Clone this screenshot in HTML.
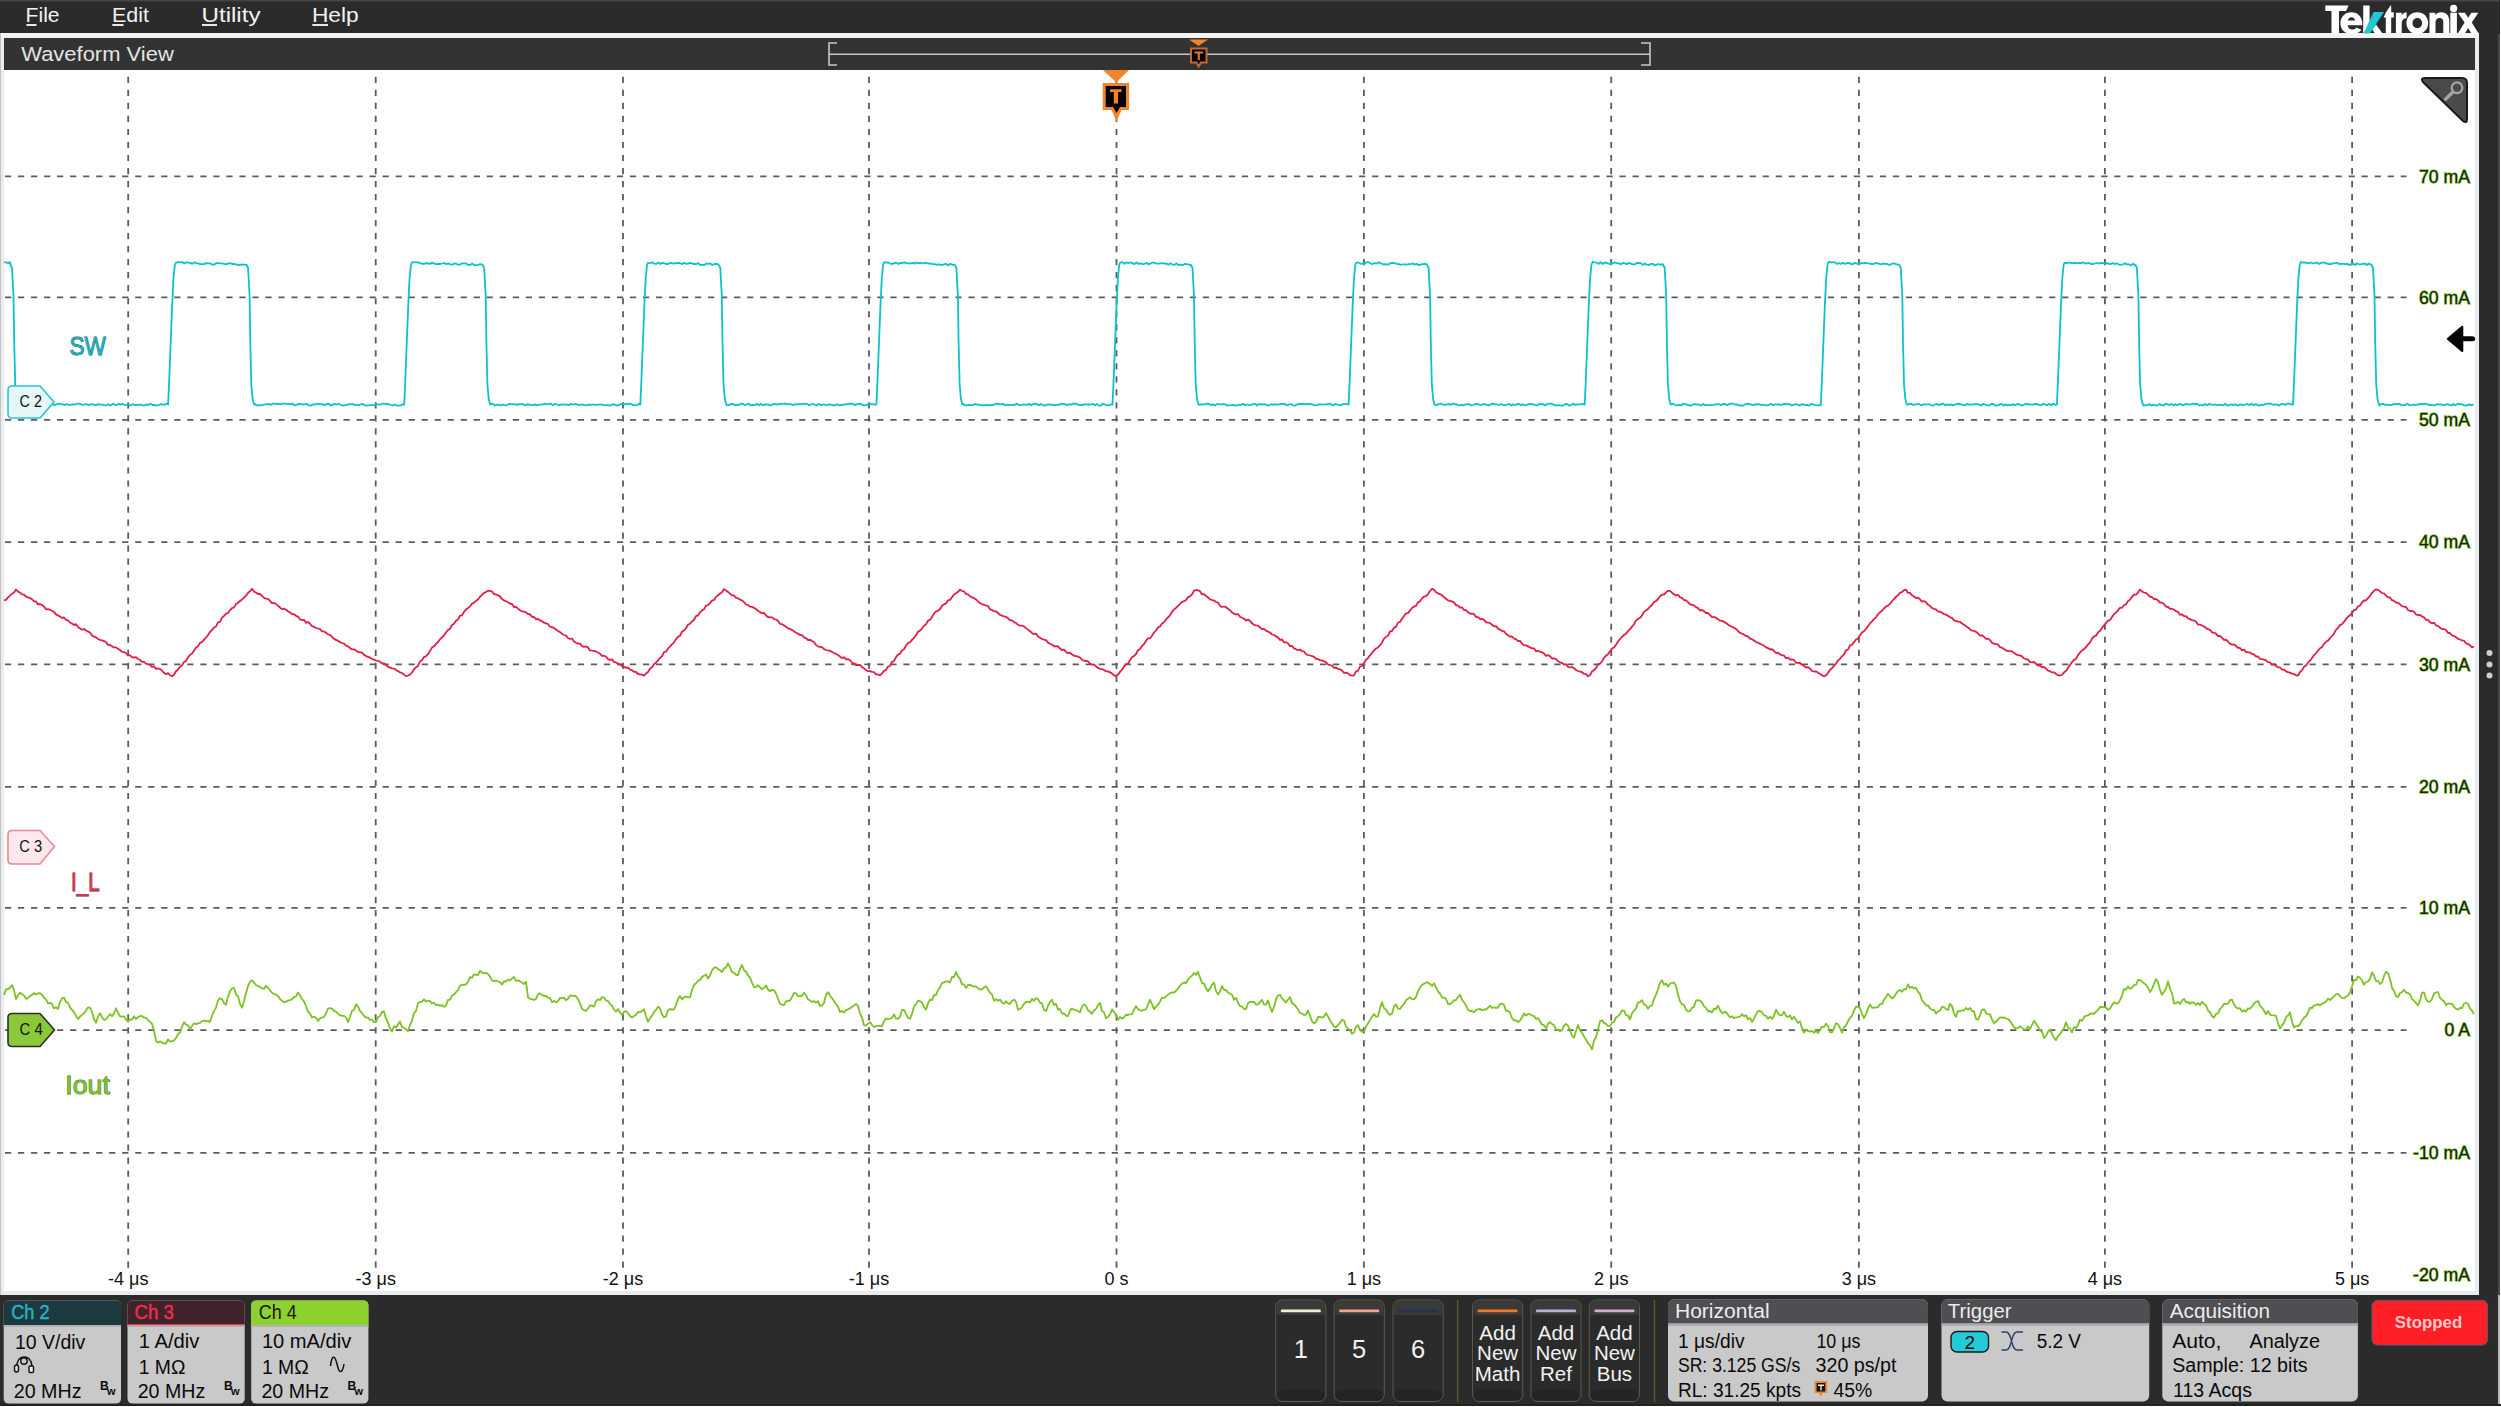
<!DOCTYPE html>
<html><head><meta charset="utf-8"><title>Tektronix Waveform View</title>
<style>
html,body{margin:0;padding:0;}
body{width:2501px;height:1407px;overflow:hidden;position:relative;background:#2b2b2b;font-family:"Liberation Sans", sans-serif;}
.abs{position:absolute;}
.gl{paint-order:stroke;stroke:#86cf34;stroke-width:1.3px;}
</style></head><body>
<div class="abs" style="left:0;top:0;width:2501px;height:33px;background:linear-gradient(#4a4a4a,#2b2b2b 2.5px)"></div>
<div class="abs" style="left:0;top:33px;width:2479px;height:1262px;background:#eaebed"></div>
<div class="abs" style="left:0;top:33px;width:1px;height:1262px;background:#c2c2c6"></div>
<div class="abs" style="left:1px;top:33px;width:2478px;height:5px;background:#f2f4f5"></div>
<div class="abs" style="left:4px;top:38px;width:2471px;height:32px;background:#333333"></div>
<div class="abs" style="left:4px;top:70px;width:2471px;height:1221px;background:#ffffff"></div>
<div class="abs" style="left:2479px;top:33px;width:22px;height:1262px;background:#2b2b2b"></div>
<div class="abs" style="left:2498px;top:34px;width:2px;height:1261px;background:#4a4a4e"></div>
<div class="abs" style="left:2498px;top:1295px;width:2px;height:112px;background:#b8b8b8"></div>
<div class="abs" style="left:2500px;top:0;width:1px;height:1407px;background:#ffffff"></div>
<div class="abs" style="left:0;top:1404px;width:2501px;height:2px;background:#222"></div>
<div class="abs" style="left:0;top:1406px;width:2501px;height:1px;background:#ffffff"></div>

<svg width="2501" height="1407" viewBox="0 0 2501 1407" style="position:absolute;left:0;top:0">
 <g stroke="#5c5c5c" stroke-width="1.8" stroke-dasharray="6.2 6.82" fill="none"><line x1="128.20" y1="76.8" x2="128.20" y2="1268" /><line x1="375.70" y1="76.8" x2="375.70" y2="1268" /><line x1="623.00" y1="76.8" x2="623.00" y2="1268" /><line x1="869.00" y1="76.8" x2="869.00" y2="1268" /><line x1="1116.50" y1="76.8" x2="1116.50" y2="1268" /><line x1="1363.90" y1="76.8" x2="1363.90" y2="1268" /><line x1="1611.20" y1="76.8" x2="1611.20" y2="1268" /><line x1="1858.90" y1="76.8" x2="1858.90" y2="1268" /><line x1="2104.90" y1="76.8" x2="2104.90" y2="1268" /><line x1="2352.10" y1="76.8" x2="2352.10" y2="1268" /></g>
 <g stroke="#5c5c5c" stroke-width="1.8" stroke-dasharray="6.2 6.82" fill="none"><line x1="5" y1="176.30" x2="2406.5" y2="176.30" /><line x1="5" y1="297.40" x2="2406.5" y2="297.40" /><line x1="5" y1="419.80" x2="2406.5" y2="419.80" /><line x1="5" y1="542.10" x2="2406.5" y2="542.10" /><line x1="5" y1="664.30" x2="2406.5" y2="664.30" /><line x1="5" y1="786.90" x2="2406.5" y2="786.90" /><line x1="5" y1="907.90" x2="2406.5" y2="907.90" /><line x1="5" y1="1030.10" x2="2406.5" y2="1030.10" /><line x1="5" y1="1152.90" x2="2406.5" y2="1152.90" /></g>
 <g fill="none" stroke-width="1.8" stroke-linejoin="round">
  <path d="M4.0,262.4 L6.0,262.2 L8.0,263.2 L10.0,262.1 L10.5,265.0 L12.0,268.0 L13.5,296.0 L14.2,342.0 L15.2,384.0 L16.6,399.6 L18.0,404.6 L18.5,404.7 L20.5,404.3 L22.5,403.7 L24.5,404.6 L26.5,403.7 L28.5,404.5 L30.5,403.7 L32.5,403.8 L34.5,404.4 L36.5,405.3 L38.5,403.8 L40.5,404.0 L42.5,404.9 L44.5,405.5 L46.5,404.8 L48.5,404.4 L50.5,405.6 L52.5,403.7 L54.5,405.3 L56.5,404.2 L58.5,403.9 L60.5,403.8 L62.5,404.2 L64.5,405.2 L66.5,404.0 L68.5,404.8 L70.5,404.9 L72.5,404.3 L74.5,404.7 L76.5,403.7 L78.5,403.7 L80.5,404.0 L82.5,405.0 L84.5,404.5 L86.5,404.2 L88.5,404.8 L90.5,404.5 L92.5,404.2 L94.5,405.2 L96.5,405.0 L98.5,404.1 L100.5,404.7 L102.5,404.7 L104.5,405.4 L106.5,405.1 L108.5,404.2 L110.5,405.6 L112.5,403.8 L114.5,404.4 L116.5,405.1 L118.5,403.9 L120.5,404.6 L122.5,403.7 L124.5,404.9 L126.5,405.1 L128.5,404.7 L130.5,405.4 L132.5,404.2 L134.5,405.0 L136.5,404.8 L138.5,404.8 L140.5,404.5 L142.5,405.3 L144.5,405.5 L146.5,404.5 L148.5,404.9 L150.5,403.7 L152.5,405.0 L154.5,404.9 L156.5,405.6 L158.5,405.2 L160.5,404.2 L162.5,404.4 L164.5,404.9 L166.5,403.6 L168.1,404.6 L169.1,382.6 L170.6,344.6 L172.1,306.6 L173.4,279.6 L174.8,265.0 L175.6,263.0 L176.1,262.7 L178.1,262.2 L180.1,262.1 L182.1,262.1 L184.1,263.5 L186.1,262.3 L188.1,262.6 L190.1,262.9 L192.1,263.9 L194.1,262.4 L196.1,263.2 L198.1,263.4 L200.1,264.2 L202.1,264.1 L204.1,264.2 L206.1,263.1 L208.1,263.4 L210.1,263.4 L212.1,264.5 L214.1,264.7 L216.1,263.1 L218.1,263.2 L220.1,263.4 L222.1,263.4 L224.1,264.0 L226.1,264.2 L228.1,263.6 L230.1,263.2 L232.1,264.0 L234.1,264.0 L236.1,264.4 L238.1,265.3 L240.1,264.8 L242.1,264.5 L244.1,264.7 L246.1,264.9 L246.6,265.0 L248.1,268.0 L249.6,296.0 L250.3,342.0 L251.3,384.0 L252.7,399.6 L254.1,404.6 L254.6,403.7 L256.6,405.4 L258.6,405.2 L260.6,405.3 L262.6,405.2 L264.6,404.4 L266.6,404.4 L268.6,403.8 L270.6,404.9 L272.6,403.7 L274.6,403.7 L276.6,404.0 L278.6,403.9 L280.6,404.3 L282.6,403.7 L284.6,403.6 L286.6,403.9 L288.6,403.8 L290.6,404.3 L292.6,403.7 L294.6,405.3 L296.6,404.8 L298.6,403.9 L300.6,404.1 L302.6,404.3 L304.6,404.3 L306.6,403.8 L308.6,405.3 L310.6,405.6 L312.6,404.5 L314.6,404.6 L316.6,403.8 L318.6,403.8 L320.6,404.3 L322.6,404.1 L324.6,405.3 L326.6,403.9 L328.6,403.6 L330.6,405.5 L332.6,404.7 L334.6,403.9 L336.6,404.7 L338.6,403.7 L340.6,404.7 L342.6,405.6 L344.6,405.3 L346.6,405.0 L348.6,404.1 L350.6,404.3 L352.6,403.9 L354.6,405.1 L356.6,404.7 L358.6,405.2 L360.6,404.3 L362.6,404.0 L364.6,405.2 L366.6,405.6 L368.6,405.3 L370.6,405.2 L372.6,405.2 L374.6,405.1 L376.6,404.1 L378.6,404.6 L380.6,404.3 L382.6,403.7 L384.6,403.7 L386.6,404.2 L388.6,404.1 L390.6,405.0 L392.6,405.5 L394.6,404.5 L396.6,405.5 L398.6,405.6 L400.6,405.5 L402.6,404.3 L404.2,404.6 L405.2,382.6 L406.7,344.6 L408.2,306.6 L409.5,279.6 L410.9,265.0 L411.7,263.0 L412.2,262.2 L414.2,262.3 L416.2,262.3 L418.2,262.4 L420.2,263.2 L422.2,263.9 L424.2,263.8 L426.2,263.1 L428.2,263.5 L430.2,263.8 L432.2,262.5 L434.2,263.7 L436.2,264.2 L438.2,264.0 L440.2,264.0 L442.2,263.5 L444.2,263.0 L446.2,264.2 L448.2,263.4 L450.2,264.4 L452.2,264.7 L454.2,263.6 L456.2,263.7 L458.2,264.8 L460.2,264.4 L462.2,263.4 L464.2,263.4 L466.2,263.5 L468.2,265.0 L470.2,264.9 L472.2,263.6 L474.2,265.0 L476.2,265.4 L478.2,264.8 L480.2,264.2 L482.2,264.6 L482.7,265.0 L484.2,268.0 L485.7,296.0 L486.4,342.0 L487.4,384.0 L488.8,399.6 L490.2,404.6 L490.7,403.9 L492.7,403.6 L494.7,405.5 L496.7,404.9 L498.7,404.7 L500.7,405.5 L502.7,404.5 L504.7,405.3 L506.7,405.3 L508.7,404.0 L510.7,404.1 L512.7,404.2 L514.7,404.1 L516.7,404.8 L518.7,404.1 L520.7,404.4 L522.7,403.9 L524.7,405.4 L526.7,404.3 L528.7,404.5 L530.7,404.8 L532.7,405.4 L534.7,404.4 L536.7,405.4 L538.7,404.6 L540.7,404.7 L542.7,404.6 L544.7,403.6 L546.7,404.5 L548.7,404.0 L550.7,403.6 L552.7,405.2 L554.7,403.9 L556.7,404.5 L558.7,405.1 L560.7,404.7 L562.7,404.3 L564.7,404.6 L566.7,404.7 L568.7,405.2 L570.7,403.8 L572.7,404.7 L574.7,404.1 L576.7,404.2 L578.7,405.1 L580.7,404.6 L582.7,404.7 L584.7,405.1 L586.7,405.4 L588.7,404.5 L590.7,404.8 L592.7,404.6 L594.7,404.6 L596.7,405.0 L598.7,404.5 L600.7,404.7 L602.7,404.6 L604.7,405.5 L606.7,405.0 L608.7,405.4 L610.7,405.5 L612.7,404.1 L614.7,404.7 L616.7,405.5 L618.7,405.3 L620.7,403.9 L622.7,403.8 L624.7,404.5 L626.7,403.7 L628.7,404.1 L630.7,403.7 L632.7,404.9 L634.7,405.2 L636.7,405.4 L638.7,403.9 L640.3,404.6 L641.3,382.6 L642.8,344.6 L644.3,306.6 L645.6,279.6 L647.0,265.0 L647.8,263.0 L648.3,263.2 L650.3,263.2 L652.3,262.2 L654.3,263.7 L656.3,263.9 L658.3,262.5 L660.3,264.0 L662.3,262.9 L664.3,263.2 L666.3,264.2 L668.3,264.0 L670.3,262.7 L672.3,263.3 L674.3,263.5 L676.3,263.2 L678.3,262.9 L680.3,263.2 L682.3,264.1 L684.3,262.7 L686.3,263.9 L688.3,263.7 L690.3,262.9 L692.3,263.6 L694.3,264.2 L696.3,264.0 L698.3,263.2 L700.3,265.1 L702.3,264.7 L704.3,265.1 L706.3,263.5 L708.3,263.8 L710.3,263.4 L712.3,265.0 L714.3,264.0 L716.3,263.8 L718.3,264.4 L718.8,265.0 L720.3,268.0 L721.8,296.0 L722.5,342.0 L723.5,384.0 L724.9,399.6 L726.3,404.6 L726.8,405.4 L728.8,405.2 L730.8,404.1 L732.8,403.9 L734.8,405.4 L736.8,404.7 L738.8,405.0 L740.8,403.8 L742.8,403.7 L744.8,405.0 L746.8,404.5 L748.8,403.7 L750.8,405.5 L752.8,404.9 L754.8,405.2 L756.8,403.8 L758.8,405.3 L760.8,403.7 L762.8,405.3 L764.8,404.5 L766.8,404.3 L768.8,404.7 L770.8,405.5 L772.8,404.1 L774.8,403.9 L776.8,404.7 L778.8,404.1 L780.8,403.8 L782.8,403.9 L784.8,403.7 L786.8,404.0 L788.8,404.2 L790.8,404.2 L792.8,405.1 L794.8,404.2 L796.8,404.6 L798.8,404.0 L800.8,404.3 L802.8,403.6 L804.8,404.1 L806.8,403.6 L808.8,405.1 L810.8,404.7 L812.8,404.0 L814.8,404.5 L816.8,405.5 L818.8,403.8 L820.8,405.2 L822.8,404.5 L824.8,404.6 L826.8,405.3 L828.8,404.4 L830.8,404.6 L832.8,405.0 L834.8,405.6 L836.8,404.3 L838.8,405.3 L840.8,405.0 L842.8,404.9 L844.8,404.4 L846.8,404.3 L848.8,403.7 L850.8,403.9 L852.8,403.7 L854.8,405.1 L856.8,404.1 L858.8,403.9 L860.8,403.8 L862.8,405.3 L864.8,405.3 L866.8,404.9 L868.8,404.2 L870.8,404.1 L872.8,404.2 L874.8,404.5 L876.4,404.6 L877.4,382.6 L878.9,344.6 L880.4,306.6 L881.7,279.6 L883.1,265.0 L883.9,263.0 L884.4,262.1 L886.4,262.7 L888.4,262.4 L890.4,263.9 L892.4,263.9 L894.4,263.1 L896.4,262.6 L898.4,264.1 L900.4,262.8 L902.4,263.0 L904.4,262.3 L906.4,263.1 L908.4,263.3 L910.4,263.5 L912.4,262.9 L914.4,263.6 L916.4,262.6 L918.4,263.2 L920.4,262.9 L922.4,263.5 L924.4,262.9 L926.4,262.9 L928.4,263.5 L930.4,263.4 L932.4,264.2 L934.4,264.1 L936.4,264.6 L938.4,264.5 L940.4,264.6 L942.4,265.0 L944.4,264.1 L946.4,264.0 L948.4,265.4 L950.4,263.7 L952.4,264.9 L954.4,264.8 L954.9,265.0 L956.4,268.0 L957.9,296.0 L958.6,342.0 L959.6,384.0 L961.0,399.6 L962.4,404.6 L962.9,403.7 L964.9,405.3 L966.9,405.4 L968.9,404.9 L970.9,405.1 L972.9,405.2 L974.9,403.9 L976.9,404.6 L978.9,404.6 L980.9,405.3 L982.9,405.2 L984.9,405.3 L986.9,404.8 L988.9,405.4 L990.9,405.0 L992.9,405.0 L994.9,404.1 L996.9,403.7 L998.9,403.9 L1000.9,404.3 L1002.9,403.8 L1004.9,405.3 L1006.9,404.7 L1008.9,404.9 L1010.9,404.9 L1012.9,405.0 L1014.9,404.6 L1016.9,403.6 L1018.9,405.2 L1020.9,405.1 L1022.9,404.6 L1024.9,404.7 L1026.9,404.9 L1028.9,403.7 L1030.9,405.1 L1032.9,404.1 L1034.9,403.7 L1036.9,404.1 L1038.9,405.1 L1040.9,404.0 L1042.9,405.1 L1044.9,405.6 L1046.9,404.6 L1048.9,404.4 L1050.9,404.6 L1052.9,405.0 L1054.9,405.1 L1056.9,404.8 L1058.9,404.9 L1060.9,403.8 L1062.9,403.9 L1064.9,404.1 L1066.9,405.1 L1068.9,404.2 L1070.9,404.7 L1072.9,403.6 L1074.9,403.7 L1076.9,404.1 L1078.9,404.9 L1080.9,405.0 L1082.9,405.0 L1084.9,404.2 L1086.9,404.6 L1088.9,404.5 L1090.9,404.5 L1092.9,403.8 L1094.9,405.4 L1096.9,404.0 L1098.9,405.6 L1100.9,405.5 L1102.9,403.6 L1104.9,404.5 L1106.9,405.2 L1108.9,405.5 L1110.9,404.5 L1112.5,404.6 L1113.5,382.6 L1115.0,344.6 L1116.5,306.6 L1117.8,279.6 L1119.2,265.0 L1120.0,263.0 L1120.5,262.3 L1122.5,262.3 L1124.5,263.8 L1126.5,262.4 L1128.5,263.2 L1130.5,262.3 L1132.5,263.1 L1134.5,264.1 L1136.5,262.5 L1138.5,263.9 L1140.5,263.3 L1142.5,264.1 L1144.5,263.8 L1146.5,262.9 L1148.5,264.3 L1150.5,263.5 L1152.5,262.6 L1154.5,262.7 L1156.5,263.7 L1158.5,263.7 L1160.5,263.4 L1162.5,263.1 L1164.5,263.6 L1166.5,263.6 L1168.5,264.7 L1170.5,263.1 L1172.5,264.6 L1174.5,264.8 L1176.5,263.4 L1178.5,265.1 L1180.5,264.7 L1182.5,265.2 L1184.5,264.0 L1186.5,264.2 L1188.5,264.3 L1190.5,265.5 L1191.0,265.0 L1192.5,268.0 L1194.0,296.0 L1194.7,342.0 L1195.7,384.0 L1197.1,399.6 L1198.5,404.6 L1199.0,404.8 L1201.0,404.3 L1203.0,404.5 L1205.0,404.2 L1207.0,403.7 L1209.0,403.8 L1211.0,405.3 L1213.0,404.2 L1215.0,405.5 L1217.0,404.1 L1219.0,404.1 L1221.0,404.6 L1223.0,404.0 L1225.0,404.3 L1227.0,405.5 L1229.0,405.4 L1231.0,405.2 L1233.0,404.9 L1235.0,405.4 L1237.0,405.5 L1239.0,404.7 L1241.0,405.0 L1243.0,403.7 L1245.0,405.1 L1247.0,404.5 L1249.0,405.1 L1251.0,404.9 L1253.0,404.2 L1255.0,403.7 L1257.0,405.5 L1259.0,403.9 L1261.0,404.5 L1263.0,404.3 L1265.0,404.2 L1267.0,405.1 L1269.0,405.6 L1271.0,404.1 L1273.0,404.9 L1275.0,404.2 L1277.0,404.7 L1279.0,404.4 L1281.0,403.9 L1283.0,403.9 L1285.0,404.0 L1287.0,405.4 L1289.0,404.6 L1291.0,404.0 L1293.0,405.4 L1295.0,405.6 L1297.0,404.5 L1299.0,403.9 L1301.0,404.0 L1303.0,403.8 L1305.0,404.3 L1307.0,403.8 L1309.0,404.1 L1311.0,404.1 L1313.0,404.7 L1315.0,405.4 L1317.0,405.1 L1319.0,404.4 L1321.0,404.4 L1323.0,404.6 L1325.0,404.4 L1327.0,404.3 L1329.0,403.7 L1331.0,404.2 L1333.0,405.5 L1335.0,403.9 L1337.0,404.6 L1339.0,404.9 L1341.0,405.3 L1343.0,404.0 L1345.0,404.1 L1347.0,404.1 L1348.6,404.6 L1349.6,382.6 L1351.1,344.6 L1352.6,306.6 L1353.9,279.6 L1355.3,265.0 L1356.1,263.0 L1356.6,262.6 L1358.6,262.7 L1360.6,263.8 L1362.6,263.6 L1364.6,263.7 L1366.6,262.1 L1368.6,262.2 L1370.6,263.6 L1372.6,264.0 L1374.6,263.2 L1376.6,263.5 L1378.6,262.4 L1380.6,263.2 L1382.6,264.3 L1384.6,264.2 L1386.6,264.3 L1388.6,264.5 L1390.6,263.1 L1392.6,262.9 L1394.6,263.1 L1396.6,263.8 L1398.6,264.2 L1400.6,264.8 L1402.6,264.4 L1404.6,264.3 L1406.6,264.6 L1408.6,264.0 L1410.6,264.3 L1412.6,263.3 L1414.6,264.8 L1416.6,263.8 L1418.6,265.2 L1420.6,264.7 L1422.6,264.1 L1424.6,263.8 L1426.6,264.1 L1427.1,265.0 L1428.6,268.0 L1430.1,296.0 L1430.8,342.0 L1431.8,384.0 L1433.2,399.6 L1434.6,404.6 L1435.1,404.9 L1437.1,405.0 L1439.1,403.8 L1441.1,403.7 L1443.1,404.6 L1445.1,404.8 L1447.1,404.4 L1449.1,404.0 L1451.1,404.8 L1453.1,403.6 L1455.1,404.2 L1457.1,404.5 L1459.1,405.5 L1461.1,404.9 L1463.1,405.4 L1465.1,404.6 L1467.1,404.1 L1469.1,404.1 L1471.1,405.5 L1473.1,405.0 L1475.1,404.2 L1477.1,403.6 L1479.1,404.6 L1481.1,404.9 L1483.1,404.4 L1485.1,404.1 L1487.1,404.9 L1489.1,405.5 L1491.1,404.1 L1493.1,403.7 L1495.1,404.3 L1497.1,404.4 L1499.1,405.0 L1501.1,404.0 L1503.1,405.2 L1505.1,405.1 L1507.1,404.6 L1509.1,404.0 L1511.1,405.5 L1513.1,404.2 L1515.1,405.2 L1517.1,404.1 L1519.1,404.0 L1521.1,405.1 L1523.1,404.2 L1525.1,405.5 L1527.1,404.6 L1529.1,404.0 L1531.1,404.0 L1533.1,404.4 L1535.1,404.9 L1537.1,405.5 L1539.1,403.9 L1541.1,404.4 L1543.1,404.0 L1545.1,405.5 L1547.1,403.9 L1549.1,403.7 L1551.1,403.7 L1553.1,404.4 L1555.1,405.4 L1557.1,405.4 L1559.1,405.1 L1561.1,405.6 L1563.1,405.5 L1565.1,404.3 L1567.1,404.0 L1569.1,405.5 L1571.1,405.1 L1573.1,403.7 L1575.1,404.9 L1577.1,404.4 L1579.1,404.3 L1581.1,404.3 L1583.1,403.9 L1584.7,404.6 L1585.7,382.6 L1587.2,344.6 L1588.7,306.6 L1590.0,279.6 L1591.4,265.0 L1592.2,263.0 L1592.7,261.8 L1594.7,262.4 L1596.7,262.6 L1598.7,263.9 L1600.7,262.2 L1602.7,264.0 L1604.7,262.5 L1606.7,262.9 L1608.7,263.8 L1610.7,263.9 L1612.7,263.2 L1614.7,262.4 L1616.7,263.3 L1618.7,263.2 L1620.7,264.3 L1622.7,262.9 L1624.7,263.3 L1626.7,264.4 L1628.7,262.8 L1630.7,263.6 L1632.7,264.4 L1634.7,264.4 L1636.7,263.0 L1638.7,263.0 L1640.7,263.1 L1642.7,264.9 L1644.7,263.6 L1646.7,264.6 L1648.7,265.0 L1650.7,263.9 L1652.7,263.8 L1654.7,265.3 L1656.7,264.6 L1658.7,264.0 L1660.7,264.9 L1662.7,264.2 L1663.2,265.0 L1664.7,268.0 L1666.2,296.0 L1666.9,342.0 L1667.9,384.0 L1669.3,399.6 L1670.7,404.6 L1671.2,404.2 L1673.2,403.6 L1675.2,405.1 L1677.2,405.4 L1679.2,404.9 L1681.2,405.5 L1683.2,403.6 L1685.2,404.1 L1687.2,404.6 L1689.2,405.5 L1691.2,405.5 L1693.2,404.4 L1695.2,404.1 L1697.2,404.5 L1699.2,404.6 L1701.2,405.5 L1703.2,404.0 L1705.2,405.2 L1707.2,405.1 L1709.2,405.2 L1711.2,405.1 L1713.2,404.8 L1715.2,404.3 L1717.2,404.2 L1719.2,404.3 L1721.2,405.2 L1723.2,403.8 L1725.2,404.0 L1727.2,405.1 L1729.2,404.1 L1731.2,403.7 L1733.2,403.7 L1735.2,404.7 L1737.2,404.3 L1739.2,405.6 L1741.2,405.4 L1743.2,405.6 L1745.2,404.1 L1747.2,403.8 L1749.2,403.8 L1751.2,404.6 L1753.2,405.0 L1755.2,404.5 L1757.2,404.1 L1759.2,404.4 L1761.2,404.8 L1763.2,404.9 L1765.2,405.1 L1767.2,405.3 L1769.2,404.9 L1771.2,403.8 L1773.2,405.3 L1775.2,404.2 L1777.2,404.7 L1779.2,404.3 L1781.2,405.1 L1783.2,404.0 L1785.2,404.1 L1787.2,404.1 L1789.2,403.9 L1791.2,405.4 L1793.2,404.8 L1795.2,404.3 L1797.2,404.4 L1799.2,405.6 L1801.2,404.6 L1803.2,404.1 L1805.2,405.2 L1807.2,404.9 L1809.2,405.6 L1811.2,403.8 L1813.2,404.5 L1815.2,405.2 L1817.2,405.3 L1819.2,405.4 L1820.8,404.6 L1821.8,382.6 L1823.3,344.6 L1824.8,306.6 L1826.1,279.6 L1827.5,265.0 L1828.3,263.0 L1828.8,261.9 L1830.8,262.4 L1832.8,262.1 L1834.8,262.3 L1836.8,263.9 L1838.8,263.2 L1840.8,264.0 L1842.8,262.9 L1844.8,263.9 L1846.8,263.1 L1848.8,262.8 L1850.8,263.9 L1852.8,264.3 L1854.8,262.7 L1856.8,263.7 L1858.8,263.8 L1860.8,263.0 L1862.8,263.4 L1864.8,263.0 L1866.8,263.2 L1868.8,263.3 L1870.8,264.0 L1872.8,264.2 L1874.8,263.4 L1876.8,263.0 L1878.8,263.7 L1880.8,264.5 L1882.8,263.5 L1884.8,263.8 L1886.8,263.7 L1888.8,264.9 L1890.8,264.4 L1892.8,263.5 L1894.8,263.7 L1896.8,264.3 L1898.8,264.7 L1899.3,265.0 L1900.8,268.0 L1902.3,296.0 L1903.0,342.0 L1904.0,384.0 L1905.4,399.6 L1906.8,404.6 L1907.3,404.9 L1909.3,403.8 L1911.3,403.9 L1913.3,405.0 L1915.3,404.4 L1917.3,404.2 L1919.3,404.2 L1921.3,405.5 L1923.3,404.2 L1925.3,404.7 L1927.3,404.3 L1929.3,404.4 L1931.3,405.3 L1933.3,405.6 L1935.3,404.3 L1937.3,404.0 L1939.3,405.1 L1941.3,404.0 L1943.3,403.6 L1945.3,405.4 L1947.3,404.4 L1949.3,405.2 L1951.3,404.4 L1953.3,405.4 L1955.3,404.5 L1957.3,403.9 L1959.3,403.6 L1961.3,404.7 L1963.3,404.9 L1965.3,405.4 L1967.3,403.8 L1969.3,404.8 L1971.3,404.3 L1973.3,404.6 L1975.3,403.9 L1977.3,404.2 L1979.3,404.6 L1981.3,405.5 L1983.3,403.8 L1985.3,404.6 L1987.3,405.2 L1989.3,405.5 L1991.3,404.0 L1993.3,403.9 L1995.3,405.5 L1997.3,405.6 L1999.3,404.6 L2001.3,403.7 L2003.3,405.5 L2005.3,404.4 L2007.3,405.4 L2009.3,404.8 L2011.3,405.2 L2013.3,403.9 L2015.3,405.2 L2017.3,404.0 L2019.3,404.4 L2021.3,405.3 L2023.3,405.3 L2025.3,404.0 L2027.3,404.0 L2029.3,404.4 L2031.3,404.6 L2033.3,404.4 L2035.3,403.8 L2037.3,404.1 L2039.3,405.0 L2041.3,405.4 L2043.3,403.7 L2045.3,404.7 L2047.3,405.1 L2049.3,403.7 L2051.3,405.3 L2053.3,403.8 L2055.3,404.8 L2056.9,404.6 L2057.9,382.6 L2059.4,344.6 L2060.9,306.6 L2062.2,279.6 L2063.6,265.0 L2064.4,263.0 L2064.9,262.9 L2066.9,263.1 L2068.9,262.5 L2070.9,262.8 L2072.9,263.2 L2074.9,262.9 L2076.9,263.4 L2078.9,263.0 L2080.9,263.1 L2082.9,262.3 L2084.9,263.5 L2086.9,263.3 L2088.9,262.9 L2090.9,264.0 L2092.9,264.1 L2094.9,263.5 L2096.9,263.0 L2098.9,263.6 L2100.9,262.9 L2102.9,263.0 L2104.9,263.7 L2106.9,263.0 L2108.9,263.8 L2110.9,264.0 L2112.9,263.1 L2114.9,264.3 L2116.9,263.3 L2118.9,264.6 L2120.9,264.8 L2122.9,264.3 L2124.9,263.4 L2126.9,264.4 L2128.9,264.2 L2130.9,265.4 L2132.9,263.8 L2134.9,265.3 L2135.4,265.0 L2136.9,268.0 L2138.4,296.0 L2139.1,342.0 L2140.1,384.0 L2141.5,399.6 L2142.9,404.6 L2143.4,405.6 L2145.4,405.1 L2147.4,405.2 L2149.4,404.0 L2151.4,405.6 L2153.4,404.6 L2155.4,405.5 L2157.4,405.4 L2159.4,403.9 L2161.4,405.2 L2163.4,405.5 L2165.4,403.7 L2167.4,404.3 L2169.4,405.1 L2171.4,403.9 L2173.4,405.4 L2175.4,404.1 L2177.4,405.2 L2179.4,403.9 L2181.4,404.6 L2183.4,405.4 L2185.4,404.0 L2187.4,404.1 L2189.4,404.6 L2191.4,404.2 L2193.4,403.7 L2195.4,404.0 L2197.4,403.9 L2199.4,405.5 L2201.4,405.0 L2203.4,405.4 L2205.4,403.9 L2207.4,405.2 L2209.4,403.8 L2211.4,404.7 L2213.4,404.9 L2215.4,404.3 L2217.4,405.3 L2219.4,404.7 L2221.4,404.8 L2223.4,405.4 L2225.4,403.8 L2227.4,405.6 L2229.4,404.9 L2231.4,404.4 L2233.4,405.2 L2235.4,404.1 L2237.4,405.6 L2239.4,404.8 L2241.4,404.3 L2243.4,405.1 L2245.4,404.5 L2247.4,404.0 L2249.4,405.1 L2251.4,403.7 L2253.4,405.2 L2255.4,404.1 L2257.4,404.9 L2259.4,405.6 L2261.4,404.8 L2263.4,404.9 L2265.4,404.2 L2267.4,403.6 L2269.4,403.7 L2271.4,403.9 L2273.4,404.8 L2275.4,404.5 L2277.4,404.6 L2279.4,405.4 L2281.4,403.9 L2283.4,404.1 L2285.4,404.9 L2287.4,403.6 L2289.4,403.6 L2291.4,404.3 L2293.0,404.6 L2294.0,382.6 L2295.5,344.6 L2297.0,306.6 L2298.3,279.6 L2299.7,265.0 L2300.5,263.0 L2301.0,262.0 L2303.0,262.6 L2305.0,262.3 L2307.0,263.1 L2309.0,263.2 L2311.0,262.5 L2313.0,263.3 L2315.0,263.1 L2317.0,262.5 L2319.0,264.1 L2321.0,262.8 L2323.0,262.6 L2325.0,262.6 L2327.0,263.7 L2329.0,264.2 L2331.0,264.1 L2333.0,263.4 L2335.0,263.2 L2337.0,262.7 L2339.0,264.0 L2341.0,263.9 L2343.0,263.6 L2345.0,264.2 L2347.0,263.8 L2349.0,264.9 L2351.0,264.5 L2353.0,263.6 L2355.0,265.0 L2357.0,263.3 L2359.0,264.3 L2361.0,264.1 L2363.0,263.8 L2365.0,263.5 L2367.0,265.0 L2369.0,263.5 L2371.0,264.7 L2371.5,265.0 L2373.0,268.0 L2374.5,296.0 L2375.2,342.0 L2376.2,384.0 L2377.6,399.6 L2379.0,404.6 L2379.5,405.5 L2381.5,403.9 L2383.5,404.0 L2385.5,404.8 L2387.5,404.6 L2389.5,404.9 L2391.5,405.2 L2393.5,403.9 L2395.5,404.2 L2397.5,404.2 L2399.5,403.7 L2401.5,405.4 L2403.5,405.2 L2405.5,405.0 L2407.5,403.6 L2409.5,405.3 L2411.5,405.1 L2413.5,404.5 L2415.5,405.1 L2417.5,404.5 L2419.5,404.1 L2421.5,403.8 L2423.5,404.1 L2425.5,403.7 L2427.5,404.3 L2429.5,405.1 L2431.5,405.0 L2433.5,405.3 L2435.5,405.0 L2437.5,404.1 L2439.5,404.7 L2441.5,404.5 L2443.5,405.2 L2445.5,404.6 L2447.5,404.1 L2449.5,404.9 L2451.5,405.5 L2453.5,404.0 L2455.5,405.4 L2457.5,403.6 L2459.5,404.1 L2461.5,404.1 L2463.5,405.1 L2465.5,405.5 L2467.5,405.1 L2469.5,404.3 L2471.5,405.4 L2473.5,404.3" stroke="#0ac3cb"/>
  <path d="M4.0,600.3 L6.0,599.9 L8.0,597.4 L10.0,595.6 L12.0,593.7 L14.0,592.5 L16.0,589.5 L18.0,591.6 L20.0,592.6 L22.0,594.3 L24.0,594.6 L26.0,596.5 L28.0,597.4 L30.0,598.1 L32.0,599.2 L34.0,601.3 L36.0,601.4 L38.0,604.4 L40.0,604.0 L42.0,605.0 L44.0,606.4 L46.0,609.3 L48.0,609.2 L50.0,609.8 L52.0,610.7 L54.0,611.9 L56.0,614.4 L58.0,615.4 L60.0,616.6 L62.0,617.9 L64.0,617.5 L66.0,619.8 L68.0,620.4 L70.0,622.5 L72.0,623.6 L74.0,624.9 L76.0,624.2 L78.0,627.1 L80.0,628.4 L82.0,629.7 L84.0,629.0 L86.0,630.5 L88.0,631.5 L90.0,632.5 L92.0,635.5 L94.0,636.6 L96.0,637.4 L98.0,639.0 L100.0,639.8 L102.0,640.3 L104.0,641.1 L106.0,642.3 L108.0,644.9 L110.0,644.9 L112.0,646.2 L114.0,647.4 L116.0,647.4 L118.0,648.9 L120.0,650.0 L122.0,651.9 L124.0,652.1 L126.0,653.0 L128.0,655.4 L130.0,655.3 L132.0,657.1 L134.0,657.5 L136.0,657.2 L138.0,659.0 L140.0,660.0 L142.0,661.8 L144.0,661.8 L146.0,663.6 L148.0,664.3 L150.0,664.6 L152.0,667.0 L154.0,666.3 L156.0,668.9 L158.0,668.5 L160.0,669.1 L162.0,670.5 L164.0,672.8 L166.0,674.2 L168.0,673.1 L170.0,675.2 L172.0,676.2 L174.0,674.8 L176.0,671.2 L178.0,669.5 L180.0,666.8 L182.0,665.6 L184.0,662.0 L186.0,661.1 L188.0,657.3 L190.0,654.9 L192.0,653.6 L194.0,650.8 L196.0,647.6 L198.0,646.4 L200.0,642.9 L202.0,642.1 L204.0,639.7 L206.0,637.6 L208.0,635.0 L210.0,632.1 L212.0,629.9 L214.0,627.6 L216.0,626.4 L218.0,622.4 L220.0,621.9 L222.0,617.7 L224.0,615.8 L226.0,613.7 L228.0,613.1 L230.0,610.3 L232.0,608.1 L234.0,607.4 L236.0,604.1 L238.0,602.7 L240.0,601.0 L242.0,599.6 L244.0,597.7 L246.0,595.6 L248.0,593.0 L250.0,591.1 L252.0,588.8 L254.0,591.6 L256.0,592.5 L258.0,594.0 L260.0,594.0 L262.0,595.9 L264.0,597.9 L266.0,598.7 L268.0,598.9 L270.0,600.9 L272.0,603.1 L274.0,602.9 L276.0,604.1 L278.0,605.6 L280.0,607.7 L282.0,609.1 L284.0,608.7 L286.0,609.8 L288.0,611.2 L290.0,612.5 L292.0,614.0 L294.0,614.3 L296.0,615.8 L298.0,616.6 L300.0,619.5 L302.0,620.0 L304.0,619.8 L306.0,622.8 L308.0,622.0 L310.0,623.7 L312.0,626.2 L314.0,626.9 L316.0,628.0 L318.0,628.5 L320.0,629.2 L322.0,631.4 L324.0,631.4 L326.0,632.8 L328.0,634.4 L330.0,634.9 L332.0,636.9 L334.0,638.9 L336.0,639.9 L338.0,640.7 L340.0,642.2 L342.0,643.0 L344.0,643.5 L346.0,645.7 L348.0,646.3 L350.0,648.0 L352.0,649.4 L354.0,649.3 L356.0,650.6 L358.0,651.9 L360.0,652.2 L362.0,652.7 L364.0,654.8 L366.0,656.1 L368.0,656.9 L370.0,657.7 L372.0,659.0 L374.0,659.6 L376.0,660.5 L378.0,661.0 L380.0,661.7 L382.0,663.4 L384.0,663.3 L386.0,665.0 L388.0,666.8 L390.0,667.6 L392.0,668.4 L394.0,668.6 L396.0,670.0 L398.0,671.1 L400.0,672.4 L402.0,673.0 L404.0,674.6 L406.0,676.1 L408.0,675.5 L410.0,674.6 L412.0,672.5 L414.0,669.3 L416.0,667.2 L418.0,665.9 L420.0,661.5 L422.0,660.3 L424.0,657.1 L426.0,656.2 L428.0,654.2 L430.0,650.9 L432.0,647.6 L434.0,646.3 L436.0,643.9 L438.0,642.0 L440.0,639.3 L442.0,637.3 L444.0,635.5 L446.0,632.5 L448.0,630.0 L450.0,628.9 L452.0,625.0 L454.0,623.8 L456.0,620.8 L458.0,619.4 L460.0,615.7 L462.0,615.3 L464.0,611.9 L466.0,609.4 L468.0,608.0 L470.0,606.4 L472.0,603.6 L474.0,602.6 L476.0,600.8 L478.0,599.5 L480.0,596.8 L482.0,594.8 L484.0,592.8 L486.0,592.1 L488.0,590.6 L490.0,590.8 L492.0,591.5 L494.0,594.1 L496.0,594.5 L498.0,595.3 L500.0,596.4 L502.0,599.1 L504.0,600.4 L506.0,601.3 L508.0,602.2 L510.0,603.6 L512.0,604.1 L514.0,607.0 L516.0,606.9 L518.0,608.6 L520.0,610.2 L522.0,611.3 L524.0,611.6 L526.0,612.4 L528.0,614.0 L530.0,614.2 L532.0,616.9 L534.0,617.0 L536.0,619.2 L538.0,619.0 L540.0,620.4 L542.0,621.2 L544.0,622.7 L546.0,623.3 L548.0,624.0 L550.0,626.7 L552.0,627.0 L554.0,628.1 L556.0,629.4 L558.0,631.0 L560.0,632.1 L562.0,633.8 L564.0,635.0 L566.0,635.6 L568.0,638.0 L570.0,639.0 L572.0,638.5 L574.0,641.4 L576.0,642.8 L578.0,643.7 L580.0,643.5 L582.0,646.2 L584.0,646.8 L586.0,646.4 L588.0,647.4 L590.0,650.4 L592.0,650.7 L594.0,650.8 L596.0,651.5 L598.0,652.5 L600.0,653.7 L602.0,655.9 L604.0,655.9 L606.0,656.5 L608.0,659.1 L610.0,659.8 L612.0,659.4 L614.0,662.0 L616.0,662.4 L618.0,663.7 L620.0,664.5 L622.0,666.0 L624.0,666.8 L626.0,667.9 L628.0,667.5 L630.0,669.6 L632.0,670.2 L634.0,671.7 L636.0,672.0 L638.0,674.0 L640.0,674.3 L642.0,674.6 L644.0,675.6 L646.0,673.5 L648.0,672.0 L650.0,668.7 L652.0,667.2 L654.0,664.2 L656.0,662.6 L658.0,660.3 L660.0,658.0 L662.0,656.4 L664.0,652.2 L666.0,651.7 L668.0,648.5 L670.0,646.4 L672.0,644.3 L674.0,642.4 L676.0,639.1 L678.0,636.9 L680.0,635.8 L682.0,631.6 L684.0,630.5 L686.0,628.3 L688.0,624.7 L690.0,623.7 L692.0,621.5 L694.0,619.8 L696.0,616.2 L698.0,615.4 L700.0,612.3 L702.0,610.4 L704.0,609.4 L706.0,605.6 L708.0,605.2 L710.0,603.1 L712.0,600.6 L714.0,599.9 L716.0,596.9 L718.0,595.3 L720.0,593.5 L722.0,592.2 L724.0,589.1 L726.0,590.6 L728.0,591.9 L730.0,593.6 L732.0,595.4 L734.0,595.5 L736.0,597.9 L738.0,598.2 L740.0,599.7 L742.0,600.4 L744.0,602.2 L746.0,604.5 L748.0,605.0 L750.0,606.6 L752.0,606.8 L754.0,607.9 L756.0,609.0 L758.0,610.7 L760.0,612.0 L762.0,613.4 L764.0,612.9 L766.0,615.5 L768.0,617.0 L770.0,617.3 L772.0,617.4 L774.0,619.0 L776.0,619.5 L778.0,621.0 L780.0,623.8 L782.0,624.2 L784.0,625.4 L786.0,626.8 L788.0,628.3 L790.0,628.9 L792.0,630.1 L794.0,631.3 L796.0,632.7 L798.0,633.6 L800.0,635.0 L802.0,635.2 L804.0,637.4 L806.0,638.1 L808.0,640.0 L810.0,639.8 L812.0,641.1 L814.0,642.0 L816.0,644.9 L818.0,646.4 L820.0,646.8 L822.0,647.2 L824.0,649.1 L826.0,650.0 L828.0,650.5 L830.0,650.8 L832.0,651.9 L834.0,653.1 L836.0,653.9 L838.0,655.1 L840.0,656.5 L842.0,658.1 L844.0,657.2 L846.0,659.3 L848.0,659.1 L850.0,660.3 L852.0,662.8 L854.0,663.3 L856.0,665.0 L858.0,665.0 L860.0,665.0 L862.0,666.9 L864.0,668.3 L866.0,670.1 L868.0,671.2 L870.0,671.1 L872.0,671.9 L874.0,672.2 L876.0,674.4 L878.0,674.5 L880.0,675.4 L882.0,673.3 L884.0,670.9 L886.0,670.1 L888.0,666.5 L890.0,666.0 L892.0,661.8 L894.0,661.1 L896.0,657.2 L898.0,654.6 L900.0,653.8 L902.0,650.4 L904.0,649.2 L906.0,645.6 L908.0,643.0 L910.0,642.3 L912.0,639.9 L914.0,637.9 L916.0,635.4 L918.0,631.7 L920.0,630.6 L922.0,628.5 L924.0,625.7 L926.0,624.4 L928.0,620.7 L930.0,619.9 L932.0,617.1 L934.0,613.3 L936.0,611.3 L938.0,610.8 L940.0,609.3 L942.0,605.7 L944.0,604.4 L946.0,603.4 L948.0,600.3 L950.0,599.9 L952.0,597.2 L954.0,594.4 L956.0,593.2 L958.0,591.8 L960.0,589.6 L962.0,591.1 L964.0,591.3 L966.0,594.1 L968.0,594.4 L970.0,596.2 L972.0,597.4 L974.0,598.2 L976.0,599.4 L978.0,601.5 L980.0,603.1 L982.0,604.0 L984.0,604.8 L986.0,605.5 L988.0,606.2 L990.0,609.3 L992.0,609.9 L994.0,611.2 L996.0,611.3 L998.0,613.0 L1000.0,614.9 L1002.0,615.7 L1004.0,616.3 L1006.0,616.8 L1008.0,618.2 L1010.0,620.3 L1012.0,620.3 L1014.0,622.1 L1016.0,623.0 L1018.0,624.8 L1020.0,625.7 L1022.0,625.7 L1024.0,626.3 L1026.0,628.1 L1028.0,629.6 L1030.0,631.2 L1032.0,632.9 L1034.0,634.2 L1036.0,633.6 L1038.0,636.5 L1040.0,637.7 L1042.0,639.0 L1044.0,639.6 L1046.0,640.1 L1048.0,642.6 L1050.0,643.7 L1052.0,644.6 L1054.0,646.3 L1056.0,646.1 L1058.0,646.5 L1060.0,648.5 L1062.0,650.0 L1064.0,649.7 L1066.0,651.9 L1068.0,653.2 L1070.0,652.7 L1072.0,654.5 L1074.0,655.6 L1076.0,656.1 L1078.0,656.5 L1080.0,657.6 L1082.0,659.7 L1084.0,660.7 L1086.0,661.0 L1088.0,661.2 L1090.0,663.8 L1092.0,664.7 L1094.0,664.5 L1096.0,666.3 L1098.0,668.0 L1100.0,668.9 L1102.0,669.1 L1104.0,670.0 L1106.0,671.3 L1108.0,671.4 L1110.0,672.4 L1112.0,673.4 L1114.0,675.5 L1116.0,675.8 L1118.0,674.6 L1120.0,671.9 L1122.0,669.8 L1124.0,666.6 L1126.0,664.1 L1128.0,663.8 L1130.0,660.1 L1132.0,657.2 L1134.0,656.0 L1136.0,654.0 L1138.0,650.3 L1140.0,648.9 L1142.0,646.0 L1144.0,644.1 L1146.0,640.7 L1148.0,638.4 L1150.0,638.3 L1152.0,635.7 L1154.0,632.6 L1156.0,630.5 L1158.0,627.6 L1160.0,626.4 L1162.0,623.4 L1164.0,622.2 L1166.0,619.6 L1168.0,617.4 L1170.0,615.4 L1172.0,611.8 L1174.0,609.5 L1176.0,607.9 L1178.0,606.0 L1180.0,603.9 L1182.0,602.0 L1184.0,601.2 L1186.0,600.0 L1188.0,597.2 L1190.0,596.4 L1192.0,594.4 L1194.0,590.7 L1196.0,590.0 L1198.0,590.4 L1200.0,591.2 L1202.0,594.4 L1204.0,594.1 L1206.0,596.0 L1208.0,597.4 L1210.0,599.4 L1212.0,600.0 L1214.0,600.6 L1216.0,602.0 L1218.0,602.6 L1220.0,605.7 L1222.0,607.0 L1224.0,606.5 L1226.0,607.2 L1228.0,608.8 L1230.0,610.2 L1232.0,612.5 L1234.0,613.6 L1236.0,614.6 L1238.0,614.0 L1240.0,616.7 L1242.0,617.7 L1244.0,618.6 L1246.0,620.5 L1248.0,619.6 L1250.0,620.9 L1252.0,623.3 L1254.0,624.9 L1256.0,625.4 L1258.0,625.7 L1260.0,627.5 L1262.0,629.1 L1264.0,628.9 L1266.0,630.6 L1268.0,631.6 L1270.0,632.5 L1272.0,634.5 L1274.0,635.0 L1276.0,636.4 L1278.0,637.4 L1280.0,639.8 L1282.0,639.5 L1284.0,642.3 L1286.0,642.3 L1288.0,643.2 L1290.0,646.3 L1292.0,645.8 L1294.0,648.4 L1296.0,649.2 L1298.0,650.2 L1300.0,649.5 L1302.0,651.2 L1304.0,651.4 L1306.0,654.2 L1308.0,655.0 L1310.0,655.5 L1312.0,656.1 L1314.0,656.8 L1316.0,658.8 L1318.0,659.0 L1320.0,660.3 L1322.0,660.3 L1324.0,661.4 L1326.0,662.1 L1328.0,664.5 L1330.0,665.2 L1332.0,665.3 L1334.0,667.9 L1336.0,667.5 L1338.0,668.9 L1340.0,669.3 L1342.0,670.6 L1344.0,672.8 L1346.0,672.7 L1348.0,673.3 L1350.0,675.1 L1352.0,675.7 L1354.0,675.4 L1356.0,671.3 L1358.0,670.9 L1360.0,666.5 L1362.0,666.0 L1364.0,663.2 L1366.0,659.8 L1368.0,658.1 L1370.0,655.3 L1372.0,652.9 L1374.0,650.4 L1376.0,648.5 L1378.0,647.5 L1380.0,645.2 L1382.0,642.7 L1384.0,638.6 L1386.0,636.8 L1388.0,635.8 L1390.0,631.7 L1392.0,630.9 L1394.0,627.7 L1396.0,626.9 L1398.0,622.5 L1400.0,622.0 L1402.0,618.7 L1404.0,616.0 L1406.0,613.4 L1408.0,613.1 L1410.0,610.6 L1412.0,608.0 L1414.0,606.6 L1416.0,605.8 L1418.0,602.4 L1420.0,601.3 L1422.0,598.4 L1424.0,596.7 L1426.0,596.1 L1428.0,594.1 L1430.0,591.0 L1432.0,588.9 L1434.0,589.7 L1436.0,592.2 L1438.0,593.3 L1440.0,594.1 L1442.0,595.2 L1444.0,597.3 L1446.0,598.8 L1448.0,600.3 L1450.0,601.0 L1452.0,601.4 L1454.0,602.4 L1456.0,605.1 L1458.0,605.7 L1460.0,607.6 L1462.0,607.3 L1464.0,610.0 L1466.0,610.1 L1468.0,612.3 L1470.0,613.5 L1472.0,613.8 L1474.0,613.9 L1476.0,617.0 L1478.0,617.1 L1480.0,619.1 L1482.0,618.9 L1484.0,619.8 L1486.0,622.4 L1488.0,622.5 L1490.0,623.1 L1492.0,624.7 L1494.0,626.3 L1496.0,626.2 L1498.0,628.6 L1500.0,629.6 L1502.0,631.0 L1504.0,631.3 L1506.0,633.8 L1508.0,635.2 L1510.0,636.5 L1512.0,636.5 L1514.0,638.6 L1516.0,639.1 L1518.0,641.1 L1520.0,640.8 L1522.0,643.8 L1524.0,645.2 L1526.0,645.4 L1528.0,646.4 L1530.0,647.4 L1532.0,648.4 L1534.0,648.3 L1536.0,651.3 L1538.0,650.7 L1540.0,651.6 L1542.0,652.3 L1544.0,653.6 L1546.0,655.9 L1548.0,655.1 L1550.0,656.2 L1552.0,658.5 L1554.0,658.4 L1556.0,659.0 L1558.0,661.2 L1560.0,662.2 L1562.0,663.1 L1564.0,664.5 L1566.0,664.2 L1568.0,666.8 L1570.0,667.5 L1572.0,667.0 L1574.0,668.2 L1576.0,670.0 L1578.0,671.0 L1580.0,671.6 L1582.0,672.2 L1584.0,673.8 L1586.0,674.2 L1588.0,676.3 L1590.0,675.3 L1592.0,671.4 L1594.0,670.0 L1596.0,668.1 L1598.0,664.4 L1600.0,663.6 L1602.0,661.5 L1604.0,657.9 L1606.0,655.7 L1608.0,654.2 L1610.0,651.2 L1612.0,648.6 L1614.0,647.4 L1616.0,644.7 L1618.0,641.5 L1620.0,639.0 L1622.0,636.9 L1624.0,634.9 L1626.0,633.8 L1628.0,631.1 L1630.0,629.1 L1632.0,626.6 L1634.0,624.4 L1636.0,620.4 L1638.0,619.1 L1640.0,617.8 L1642.0,615.5 L1644.0,611.9 L1646.0,610.4 L1648.0,609.0 L1650.0,606.5 L1652.0,605.0 L1654.0,602.1 L1656.0,601.0 L1658.0,599.3 L1660.0,596.3 L1662.0,594.7 L1664.0,594.7 L1666.0,592.4 L1668.0,590.8 L1670.0,590.9 L1672.0,592.7 L1674.0,594.2 L1676.0,595.4 L1678.0,594.8 L1680.0,597.4 L1682.0,597.8 L1684.0,600.0 L1686.0,600.3 L1688.0,602.2 L1690.0,604.3 L1692.0,604.8 L1694.0,605.3 L1696.0,607.1 L1698.0,608.1 L1700.0,610.3 L1702.0,610.0 L1704.0,611.1 L1706.0,613.0 L1708.0,613.0 L1710.0,615.1 L1712.0,617.0 L1714.0,617.2 L1716.0,617.7 L1718.0,619.3 L1720.0,620.6 L1722.0,620.8 L1724.0,621.9 L1726.0,623.0 L1728.0,624.5 L1730.0,625.9 L1732.0,626.8 L1734.0,627.9 L1736.0,628.8 L1738.0,631.0 L1740.0,632.8 L1742.0,633.5 L1744.0,634.7 L1746.0,636.0 L1748.0,636.3 L1750.0,638.6 L1752.0,639.2 L1754.0,640.6 L1756.0,642.0 L1758.0,642.9 L1760.0,643.7 L1762.0,644.8 L1764.0,645.8 L1766.0,647.4 L1768.0,648.1 L1770.0,649.5 L1772.0,649.2 L1774.0,650.9 L1776.0,653.0 L1778.0,652.6 L1780.0,654.3 L1782.0,655.1 L1784.0,655.6 L1786.0,658.2 L1788.0,657.6 L1790.0,659.6 L1792.0,659.3 L1794.0,660.0 L1796.0,662.8 L1798.0,662.9 L1800.0,663.0 L1802.0,664.8 L1804.0,665.9 L1806.0,667.5 L1808.0,667.2 L1810.0,668.4 L1812.0,671.0 L1814.0,671.5 L1816.0,671.3 L1818.0,672.7 L1820.0,673.7 L1822.0,675.4 L1824.0,676.3 L1826.0,675.4 L1828.0,673.0 L1830.0,670.0 L1832.0,668.1 L1834.0,665.8 L1836.0,663.5 L1838.0,660.5 L1840.0,658.9 L1842.0,656.3 L1844.0,654.5 L1846.0,650.4 L1848.0,649.7 L1850.0,645.4 L1852.0,644.8 L1854.0,642.1 L1856.0,639.6 L1858.0,638.4 L1860.0,635.2 L1862.0,632.6 L1864.0,631.2 L1866.0,629.1 L1868.0,626.2 L1870.0,623.4 L1872.0,621.3 L1874.0,619.1 L1876.0,617.4 L1878.0,614.1 L1880.0,612.3 L1882.0,610.7 L1884.0,608.5 L1886.0,606.5 L1888.0,605.6 L1890.0,603.9 L1892.0,601.2 L1894.0,599.2 L1896.0,596.8 L1898.0,595.1 L1900.0,592.9 L1902.0,592.0 L1904.0,590.1 L1906.0,589.7 L1908.0,592.9 L1910.0,592.9 L1912.0,595.3 L1914.0,596.5 L1916.0,598.0 L1918.0,597.6 L1920.0,599.4 L1922.0,601.7 L1924.0,601.0 L1926.0,602.3 L1928.0,604.7 L1930.0,605.8 L1932.0,608.0 L1934.0,608.8 L1936.0,609.4 L1938.0,611.5 L1940.0,611.6 L1942.0,612.7 L1944.0,614.2 L1946.0,614.6 L1948.0,615.7 L1950.0,617.3 L1952.0,617.9 L1954.0,620.3 L1956.0,620.8 L1958.0,621.6 L1960.0,621.8 L1962.0,623.5 L1964.0,624.7 L1966.0,626.2 L1968.0,627.4 L1970.0,629.3 L1972.0,630.7 L1974.0,630.8 L1976.0,631.9 L1978.0,633.5 L1980.0,635.6 L1982.0,635.3 L1984.0,636.9 L1986.0,638.8 L1988.0,638.6 L1990.0,640.1 L1992.0,642.8 L1994.0,643.6 L1996.0,644.1 L1998.0,644.5 L2000.0,647.2 L2002.0,647.7 L2004.0,649.0 L2006.0,650.4 L2008.0,651.1 L2010.0,651.1 L2012.0,651.4 L2014.0,652.7 L2016.0,654.2 L2018.0,655.1 L2020.0,655.4 L2022.0,656.4 L2024.0,658.3 L2026.0,659.2 L2028.0,659.7 L2030.0,662.1 L2032.0,662.3 L2034.0,662.0 L2036.0,663.8 L2038.0,665.6 L2040.0,665.6 L2042.0,667.4 L2044.0,666.9 L2046.0,668.6 L2048.0,670.7 L2050.0,671.2 L2052.0,672.4 L2054.0,672.3 L2056.0,674.0 L2058.0,675.1 L2060.0,675.5 L2062.0,675.0 L2064.0,672.4 L2066.0,671.1 L2068.0,667.8 L2070.0,665.1 L2072.0,662.1 L2074.0,659.9 L2076.0,658.9 L2078.0,655.1 L2080.0,652.7 L2082.0,650.5 L2084.0,649.0 L2086.0,647.3 L2088.0,644.5 L2090.0,642.6 L2092.0,638.7 L2094.0,636.3 L2096.0,635.7 L2098.0,632.5 L2100.0,631.1 L2102.0,628.0 L2104.0,625.3 L2106.0,623.2 L2108.0,620.6 L2110.0,620.1 L2112.0,617.1 L2114.0,614.3 L2116.0,612.4 L2118.0,610.4 L2120.0,607.8 L2122.0,607.8 L2124.0,605.2 L2126.0,604.2 L2128.0,601.1 L2130.0,599.6 L2132.0,596.9 L2134.0,594.6 L2136.0,594.7 L2138.0,592.6 L2140.0,589.6 L2142.0,591.4 L2144.0,592.6 L2146.0,592.8 L2148.0,594.7 L2150.0,596.8 L2152.0,597.0 L2154.0,599.2 L2156.0,598.9 L2158.0,600.5 L2160.0,602.5 L2162.0,602.6 L2164.0,604.1 L2166.0,606.6 L2168.0,607.0 L2170.0,608.8 L2172.0,608.7 L2174.0,609.7 L2176.0,611.2 L2178.0,611.9 L2180.0,614.8 L2182.0,614.4 L2184.0,616.1 L2186.0,616.2 L2188.0,618.3 L2190.0,619.1 L2192.0,620.2 L2194.0,620.6 L2196.0,621.8 L2198.0,624.5 L2200.0,624.6 L2202.0,625.5 L2204.0,626.5 L2206.0,628.0 L2208.0,629.1 L2210.0,629.8 L2212.0,632.4 L2214.0,632.9 L2216.0,633.7 L2218.0,636.1 L2220.0,636.0 L2222.0,637.6 L2224.0,640.0 L2226.0,639.6 L2228.0,641.5 L2230.0,643.6 L2232.0,644.7 L2234.0,644.5 L2236.0,646.0 L2238.0,647.8 L2240.0,648.0 L2242.0,650.3 L2244.0,649.6 L2246.0,652.2 L2248.0,652.2 L2250.0,652.6 L2252.0,654.0 L2254.0,654.3 L2256.0,656.5 L2258.0,656.5 L2260.0,658.9 L2262.0,659.2 L2264.0,659.7 L2266.0,660.4 L2268.0,662.2 L2270.0,662.3 L2272.0,664.8 L2274.0,664.1 L2276.0,666.0 L2278.0,667.1 L2280.0,667.5 L2282.0,669.6 L2284.0,669.7 L2286.0,671.3 L2288.0,672.1 L2290.0,672.6 L2292.0,673.7 L2294.0,674.1 L2296.0,675.3 L2298.0,675.5 L2300.0,672.0 L2302.0,670.4 L2304.0,666.8 L2306.0,665.5 L2308.0,662.7 L2310.0,660.7 L2312.0,657.9 L2314.0,655.1 L2316.0,653.3 L2318.0,650.7 L2320.0,648.2 L2322.0,647.1 L2324.0,643.8 L2326.0,641.8 L2328.0,640.6 L2330.0,638.1 L2332.0,636.0 L2334.0,633.7 L2336.0,629.8 L2338.0,627.9 L2340.0,625.1 L2342.0,624.2 L2344.0,621.9 L2346.0,618.9 L2348.0,616.8 L2350.0,615.1 L2352.0,613.0 L2354.0,610.2 L2356.0,609.6 L2358.0,606.6 L2360.0,605.4 L2362.0,602.5 L2364.0,600.5 L2366.0,600.3 L2368.0,598.1 L2370.0,596.1 L2372.0,592.8 L2374.0,590.9 L2376.0,589.3 L2378.0,589.8 L2380.0,591.4 L2382.0,593.0 L2384.0,593.5 L2386.0,595.3 L2388.0,597.3 L2390.0,597.5 L2392.0,600.2 L2394.0,600.9 L2396.0,602.5 L2398.0,602.7 L2400.0,604.3 L2402.0,606.1 L2404.0,606.6 L2406.0,607.0 L2408.0,610.0 L2410.0,611.0 L2412.0,611.0 L2414.0,611.6 L2416.0,614.5 L2418.0,615.1 L2420.0,614.9 L2422.0,616.5 L2424.0,617.3 L2426.0,619.9 L2428.0,619.8 L2430.0,622.4 L2432.0,623.2 L2434.0,622.8 L2436.0,625.3 L2438.0,625.8 L2440.0,627.7 L2442.0,629.1 L2444.0,629.1 L2446.0,629.9 L2448.0,633.0 L2450.0,633.0 L2452.0,635.4 L2454.0,636.0 L2456.0,637.3 L2458.0,638.8 L2460.0,639.5 L2462.0,640.3 L2464.0,640.7 L2466.0,643.3 L2468.0,643.9 L2470.0,645.3 L2472.0,647.3 L2474.0,646.5" stroke="#df1f45"/>
  <path d="M4.0,994.9 L6.0,989.2 L8.0,989.2 L10.0,987.5 L12.0,985.1 L14.0,990.2 L16.0,999.1 L18.0,995.3 L20.0,992.7 L22.0,994.0 L24.0,995.6 L26.0,998.8 L28.0,998.0 L30.0,995.9 L32.0,995.0 L34.0,993.1 L36.0,994.4 L38.0,993.4 L40.0,993.2 L42.0,994.7 L44.0,997.7 L46.0,999.4 L48.0,1003.4 L50.0,1002.8 L52.0,1004.0 L54.0,1008.4 L56.0,1007.2 L58.0,1008.9 L60.0,1002.2 L62.0,998.4 L64.0,997.7 L66.0,1002.1 L68.0,1002.9 L70.0,1007.4 L72.0,1010.0 L74.0,1012.0 L76.0,1015.9 L78.0,1019.0 L80.0,1016.7 L82.0,1014.9 L84.0,1013.2 L86.0,1010.4 L88.0,1007.5 L90.0,1007.6 L92.0,1012.0 L94.0,1019.0 L96.0,1022.9 L98.0,1016.5 L100.0,1013.2 L102.0,1017.1 L104.0,1019.8 L106.0,1019.3 L108.0,1016.5 L110.0,1014.0 L112.0,1016.2 L114.0,1013.6 L116.0,1008.3 L118.0,1012.7 L120.0,1016.3 L122.0,1016.6 L124.0,1016.3 L126.0,1019.7 L128.0,1021.7 L130.0,1019.4 L132.0,1019.7 L134.0,1016.3 L136.0,1019.0 L138.0,1017.2 L140.0,1015.9 L142.0,1016.1 L144.0,1017.5 L146.0,1017.9 L148.0,1020.0 L150.0,1021.9 L152.0,1023.7 L154.0,1031.1 L156.0,1040.8 L158.0,1042.7 L160.0,1041.3 L162.0,1042.7 L164.0,1043.4 L166.0,1043.5 L168.0,1039.5 L170.0,1041.3 L172.0,1041.4 L174.0,1040.5 L176.0,1038.1 L178.0,1034.0 L180.0,1032.6 L182.0,1026.6 L184.0,1022.3 L186.0,1024.6 L188.0,1025.4 L190.0,1029.0 L192.0,1026.0 L194.0,1023.3 L196.0,1024.1 L198.0,1023.3 L200.0,1022.9 L202.0,1021.1 L204.0,1020.5 L206.0,1021.3 L208.0,1020.8 L210.0,1022.0 L212.0,1015.6 L214.0,1011.1 L216.0,1007.6 L218.0,1000.6 L220.0,998.2 L222.0,999.1 L224.0,1003.0 L226.0,1004.8 L228.0,996.6 L230.0,991.3 L232.0,988.4 L234.0,987.9 L236.0,994.6 L238.0,996.0 L240.0,1003.8 L242.0,1007.7 L244.0,1001.2 L246.0,993.3 L248.0,986.1 L250.0,981.5 L252.0,980.3 L254.0,982.7 L256.0,985.2 L258.0,985.8 L260.0,987.1 L262.0,988.2 L264.0,988.9 L266.0,985.8 L268.0,987.7 L270.0,990.3 L272.0,992.8 L274.0,993.8 L276.0,994.8 L278.0,996.0 L280.0,998.9 L282.0,1000.8 L284.0,1002.4 L286.0,1001.7 L288.0,1000.6 L290.0,1000.2 L292.0,999.4 L294.0,996.9 L296.0,996.7 L298.0,992.5 L300.0,995.3 L302.0,999.1 L304.0,1001.3 L306.0,1006.0 L308.0,1011.6 L310.0,1013.4 L312.0,1017.5 L314.0,1016.8 L316.0,1017.6 L318.0,1021.0 L320.0,1018.3 L322.0,1017.5 L324.0,1016.9 L326.0,1013.3 L328.0,1008.7 L330.0,1008.2 L332.0,1008.7 L334.0,1010.9 L336.0,1011.7 L338.0,1013.6 L340.0,1015.2 L342.0,1015.9 L344.0,1015.9 L346.0,1017.4 L348.0,1022.1 L350.0,1017.0 L352.0,1010.8 L354.0,1009.9 L356.0,1004.5 L358.0,1006.3 L360.0,1011.0 L362.0,1012.9 L364.0,1015.9 L366.0,1017.6 L368.0,1017.4 L370.0,1020.0 L372.0,1019.4 L374.0,1022.2 L376.0,1022.1 L378.0,1017.2 L380.0,1015.8 L382.0,1011.9 L384.0,1011.5 L386.0,1018.7 L388.0,1022.5 L390.0,1028.1 L392.0,1031.6 L394.0,1026.3 L396.0,1027.5 L398.0,1024.5 L400.0,1021.6 L402.0,1027.1 L404.0,1028.0 L406.0,1029.3 L408.0,1031.2 L410.0,1025.0 L412.0,1020.9 L414.0,1013.2 L416.0,1010.9 L418.0,1003.1 L420.0,1001.9 L422.0,1001.7 L424.0,999.4 L426.0,1001.7 L428.0,1000.7 L430.0,1001.2 L432.0,1003.5 L434.0,1002.8 L436.0,1005.2 L438.0,1004.6 L440.0,1005.9 L442.0,1005.0 L444.0,1006.8 L446.0,1005.7 L448.0,1000.0 L450.0,999.6 L452.0,995.6 L454.0,994.8 L456.0,992.1 L458.0,990.2 L460.0,985.5 L462.0,984.6 L464.0,984.8 L466.0,984.4 L468.0,982.0 L470.0,977.1 L472.0,977.8 L474.0,974.4 L476.0,974.9 L478.0,975.0 L480.0,970.7 L482.0,972.6 L484.0,973.2 L486.0,972.9 L488.0,974.0 L490.0,976.7 L492.0,980.4 L494.0,981.2 L496.0,980.6 L498.0,981.5 L500.0,982.2 L502.0,984.5 L504.0,981.2 L506.0,981.7 L508.0,979.7 L510.0,980.5 L512.0,978.4 L514.0,977.0 L516.0,980.8 L518.0,980.3 L520.0,981.4 L522.0,982.6 L524.0,984.0 L526.0,981.8 L528.0,997.4 L530.0,998.8 L532.0,999.2 L534.0,1000.0 L536.0,998.9 L538.0,994.3 L540.0,993.3 L542.0,995.2 L544.0,995.8 L546.0,996.0 L548.0,997.7 L550.0,997.8 L552.0,1002.2 L554.0,1000.8 L556.0,1002.4 L558.0,1001.0 L560.0,998.0 L562.0,998.4 L564.0,997.6 L566.0,1000.2 L568.0,998.8 L570.0,995.8 L572.0,995.5 L574.0,996.0 L576.0,996.2 L578.0,999.2 L580.0,1003.7 L582.0,1008.6 L584.0,1010.1 L586.0,1010.9 L588.0,1008.5 L590.0,1005.4 L592.0,1005.6 L594.0,1006.7 L596.0,1001.1 L598.0,999.4 L600.0,1000.2 L602.0,997.1 L604.0,997.6 L606.0,1000.3 L608.0,1001.1 L610.0,1004.1 L612.0,1005.8 L614.0,1009.5 L616.0,1011.6 L618.0,1009.0 L620.0,1012.5 L622.0,1014.9 L624.0,1011.8 L626.0,1011.0 L628.0,1013.2 L630.0,1016.0 L632.0,1017.6 L634.0,1016.1 L636.0,1014.8 L638.0,1011.9 L640.0,1012.3 L642.0,1011.2 L644.0,1009.3 L646.0,1016.0 L648.0,1021.9 L650.0,1018.1 L652.0,1015.8 L654.0,1011.9 L656.0,1009.9 L658.0,1006.6 L660.0,1008.4 L662.0,1014.5 L664.0,1017.3 L666.0,1016.4 L668.0,1010.4 L670.0,1009.1 L672.0,1009.5 L674.0,1009.5 L676.0,1005.1 L678.0,999.3 L680.0,996.0 L682.0,999.3 L684.0,997.4 L686.0,996.6 L688.0,997.4 L690.0,997.3 L692.0,990.1 L694.0,985.0 L696.0,983.3 L698.0,980.8 L700.0,980.1 L702.0,976.9 L704.0,975.9 L706.0,974.4 L708.0,978.6 L710.0,975.5 L712.0,970.4 L714.0,967.9 L716.0,967.2 L718.0,969.2 L720.0,970.0 L722.0,972.0 L724.0,968.3 L726.0,967.7 L728.0,963.3 L730.0,967.4 L732.0,972.3 L734.0,972.5 L736.0,974.8 L738.0,975.0 L740.0,968.8 L742.0,965.0 L744.0,970.3 L746.0,971.6 L748.0,975.3 L750.0,977.7 L752.0,982.6 L754.0,987.2 L756.0,987.1 L758.0,985.2 L760.0,987.5 L762.0,989.1 L764.0,987.9 L766.0,985.5 L768.0,989.5 L770.0,991.2 L772.0,989.8 L774.0,990.1 L776.0,993.5 L778.0,998.5 L780.0,1003.7 L782.0,1004.6 L784.0,1005.1 L786.0,1001.4 L788.0,1000.8 L790.0,1000.6 L792.0,997.2 L794.0,992.8 L796.0,993.3 L798.0,996.1 L800.0,996.0 L802.0,995.8 L804.0,992.7 L806.0,995.2 L808.0,999.3 L810.0,1000.6 L812.0,1001.9 L814.0,1001.1 L816.0,1002.5 L818.0,1001.3 L820.0,1005.9 L822.0,1005.5 L824.0,1003.0 L826.0,994.7 L828.0,992.3 L830.0,995.4 L832.0,998.2 L834.0,1001.1 L836.0,1003.9 L838.0,1006.6 L840.0,1012.2 L842.0,1010.8 L844.0,1012.6 L846.0,1010.1 L848.0,1009.3 L850.0,1008.4 L852.0,1006.8 L854.0,1005.6 L856.0,1003.8 L858.0,1005.9 L860.0,1013.6 L862.0,1017.6 L864.0,1025.3 L866.0,1025.4 L868.0,1023.6 L870.0,1022.1 L872.0,1025.0 L874.0,1027.2 L876.0,1025.9 L878.0,1025.8 L880.0,1025.7 L882.0,1026.2 L884.0,1021.2 L886.0,1018.6 L888.0,1019.0 L890.0,1018.6 L892.0,1017.7 L894.0,1014.4 L896.0,1018.7 L898.0,1018.9 L900.0,1016.7 L902.0,1009.9 L904.0,1009.9 L906.0,1014.1 L908.0,1017.7 L910.0,1018.8 L912.0,1013.7 L914.0,1006.4 L916.0,1004.1 L918.0,1000.7 L920.0,1001.1 L922.0,1002.8 L924.0,1007.1 L926.0,1009.6 L928.0,1003.5 L930.0,999.6 L932.0,1000.1 L934.0,995.1 L936.0,995.0 L938.0,990.2 L940.0,987.4 L942.0,983.0 L944.0,982.4 L946.0,981.6 L948.0,981.2 L950.0,982.5 L952.0,977.0 L954.0,977.0 L956.0,972.0 L958.0,976.3 L960.0,978.9 L962.0,984.4 L964.0,984.4 L966.0,987.9 L968.0,985.0 L970.0,984.8 L972.0,985.9 L974.0,986.5 L976.0,986.4 L978.0,988.2 L980.0,989.5 L982.0,989.3 L984.0,987.5 L986.0,986.3 L988.0,989.6 L990.0,992.7 L992.0,994.4 L994.0,1000.7 L996.0,999.2 L998.0,1000.8 L1000.0,999.4 L1002.0,1002.8 L1004.0,1003.7 L1006.0,1001.3 L1008.0,1003.5 L1010.0,1003.9 L1012.0,1000.7 L1014.0,999.7 L1016.0,1001.9 L1018.0,1009.8 L1020.0,1008.9 L1022.0,1007.4 L1024.0,1003.8 L1026.0,1002.0 L1028.0,1001.7 L1030.0,1002.5 L1032.0,998.9 L1034.0,1000.8 L1036.0,998.1 L1038.0,999.0 L1040.0,1002.6 L1042.0,1003.4 L1044.0,1009.9 L1046.0,1011.1 L1048.0,1005.8 L1050.0,1001.8 L1052.0,999.7 L1054.0,1005.1 L1056.0,1003.7 L1058.0,1009.6 L1060.0,1009.0 L1062.0,1013.6 L1064.0,1013.3 L1066.0,1015.6 L1068.0,1016.2 L1070.0,1010.7 L1072.0,1008.4 L1074.0,1009.9 L1076.0,1009.9 L1078.0,1011.2 L1080.0,1012.3 L1082.0,1006.6 L1084.0,1004.5 L1086.0,1005.8 L1088.0,1010.2 L1090.0,1011.7 L1092.0,1013.8 L1094.0,1010.5 L1096.0,1008.9 L1098.0,1005.2 L1100.0,1002.9 L1102.0,1011.0 L1104.0,1012.2 L1106.0,1018.2 L1108.0,1016.9 L1110.0,1014.5 L1112.0,1009.4 L1114.0,1012.0 L1116.0,1014.6 L1118.0,1019.8 L1120.0,1017.0 L1122.0,1018.7 L1124.0,1017.4 L1126.0,1014.8 L1128.0,1015.0 L1130.0,1014.4 L1132.0,1014.1 L1134.0,1009.5 L1136.0,1006.2 L1138.0,1009.1 L1140.0,1010.3 L1142.0,1010.8 L1144.0,1009.7 L1146.0,1009.5 L1148.0,1004.5 L1150.0,999.9 L1152.0,1004.2 L1154.0,1009.1 L1156.0,1006.6 L1158.0,1004.8 L1160.0,1001.7 L1162.0,997.5 L1164.0,998.0 L1166.0,996.4 L1168.0,994.6 L1170.0,993.1 L1172.0,992.4 L1174.0,992.5 L1176.0,990.8 L1178.0,988.7 L1180.0,985.7 L1182.0,983.7 L1184.0,982.4 L1186.0,983.4 L1188.0,979.5 L1190.0,977.4 L1192.0,975.8 L1194.0,972.9 L1196.0,974.9 L1198.0,971.8 L1200.0,977.5 L1202.0,982.9 L1204.0,983.6 L1206.0,988.4 L1208.0,991.1 L1210.0,988.6 L1212.0,984.7 L1214.0,982.5 L1216.0,991.1 L1218.0,994.4 L1220.0,991.6 L1222.0,986.0 L1224.0,989.8 L1226.0,989.9 L1228.0,992.6 L1230.0,993.8 L1232.0,994.7 L1234.0,999.8 L1236.0,997.9 L1238.0,1002.9 L1240.0,1006.0 L1242.0,1006.7 L1244.0,1009.0 L1246.0,1009.1 L1248.0,1003.1 L1250.0,1001.6 L1252.0,1002.0 L1254.0,1001.8 L1256.0,1004.5 L1258.0,1004.6 L1260.0,1001.8 L1262.0,1000.0 L1264.0,1004.3 L1266.0,1004.7 L1268.0,1000.5 L1270.0,1006.8 L1272.0,1011.8 L1274.0,1006.9 L1276.0,999.2 L1278.0,995.5 L1280.0,994.8 L1282.0,998.4 L1284.0,1000.3 L1286.0,1002.6 L1288.0,999.5 L1290.0,997.1 L1292.0,1003.1 L1294.0,1004.4 L1296.0,1006.7 L1298.0,1009.3 L1300.0,1013.1 L1302.0,1013.3 L1304.0,1015.1 L1306.0,1014.5 L1308.0,1010.5 L1310.0,1015.7 L1312.0,1021.3 L1314.0,1023.4 L1316.0,1022.1 L1318.0,1017.0 L1320.0,1016.8 L1322.0,1017.7 L1324.0,1016.7 L1326.0,1013.1 L1328.0,1016.4 L1330.0,1020.4 L1332.0,1023.4 L1334.0,1026.6 L1336.0,1027.4 L1338.0,1024.9 L1340.0,1023.0 L1342.0,1019.8 L1344.0,1020.5 L1346.0,1026.5 L1348.0,1028.7 L1350.0,1030.6 L1352.0,1033.7 L1354.0,1032.3 L1356.0,1026.9 L1358.0,1025.2 L1360.0,1030.1 L1362.0,1031.8 L1364.0,1031.3 L1366.0,1026.6 L1368.0,1023.5 L1370.0,1019.9 L1372.0,1016.6 L1374.0,1014.1 L1376.0,1016.6 L1378.0,1016.3 L1380.0,1008.1 L1382.0,1002.2 L1384.0,1008.1 L1386.0,1009.7 L1388.0,1013.0 L1390.0,1014.9 L1392.0,1013.5 L1394.0,1006.4 L1396.0,1004.4 L1398.0,1008.7 L1400.0,1008.9 L1402.0,1006.0 L1404.0,1004.2 L1406.0,1000.2 L1408.0,998.7 L1410.0,997.3 L1412.0,999.1 L1414.0,999.3 L1416.0,996.9 L1418.0,991.3 L1420.0,987.6 L1422.0,984.8 L1424.0,983.9 L1426.0,982.4 L1428.0,982.6 L1430.0,983.9 L1432.0,986.0 L1434.0,983.3 L1436.0,987.5 L1438.0,991.3 L1440.0,993.7 L1442.0,997.1 L1444.0,997.9 L1446.0,998.7 L1448.0,1003.9 L1450.0,1004.4 L1452.0,1002.6 L1454.0,1000.3 L1456.0,1000.0 L1458.0,997.3 L1460.0,994.8 L1462.0,999.8 L1464.0,1002.4 L1466.0,1005.2 L1468.0,1009.8 L1470.0,1011.0 L1472.0,1010.9 L1474.0,1012.3 L1476.0,1009.9 L1478.0,1009.3 L1480.0,1008.9 L1482.0,1010.2 L1484.0,1009.5 L1486.0,1009.5 L1488.0,1007.8 L1490.0,1005.7 L1492.0,1008.0 L1494.0,1007.3 L1496.0,1007.8 L1498.0,1007.5 L1500.0,1004.0 L1502.0,1003.6 L1504.0,1005.0 L1506.0,1010.9 L1508.0,1010.6 L1510.0,1012.7 L1512.0,1018.2 L1514.0,1020.4 L1516.0,1020.5 L1518.0,1022.0 L1520.0,1020.5 L1522.0,1017.6 L1524.0,1013.5 L1526.0,1015.5 L1528.0,1014.1 L1530.0,1014.2 L1532.0,1015.6 L1534.0,1016.1 L1536.0,1018.9 L1538.0,1018.2 L1540.0,1021.2 L1542.0,1024.7 L1544.0,1025.1 L1546.0,1028.4 L1548.0,1023.8 L1550.0,1022.1 L1552.0,1023.9 L1554.0,1025.2 L1556.0,1029.5 L1558.0,1030.1 L1560.0,1031.3 L1562.0,1030.3 L1564.0,1025.7 L1566.0,1023.9 L1568.0,1025.7 L1570.0,1030.6 L1572.0,1035.6 L1574.0,1037.7 L1576.0,1031.0 L1578.0,1025.0 L1580.0,1030.2 L1582.0,1032.9 L1584.0,1036.4 L1586.0,1039.6 L1588.0,1043.2 L1590.0,1045.3 L1592.0,1049.4 L1594.0,1040.6 L1596.0,1037.3 L1598.0,1029.9 L1600.0,1021.1 L1602.0,1020.3 L1604.0,1022.9 L1606.0,1023.9 L1608.0,1026.0 L1610.0,1025.9 L1612.0,1022.7 L1614.0,1022.2 L1616.0,1017.4 L1618.0,1016.2 L1620.0,1014.1 L1622.0,1010.4 L1624.0,1010.6 L1626.0,1015.1 L1628.0,1015.5 L1630.0,1019.5 L1632.0,1013.1 L1634.0,1010.8 L1636.0,1008.4 L1638.0,1002.4 L1640.0,1002.2 L1642.0,1000.1 L1644.0,1004.4 L1646.0,1005.3 L1648.0,1008.7 L1650.0,1006.0 L1652.0,1005.5 L1654.0,999.1 L1656.0,994.6 L1658.0,989.6 L1660.0,982.8 L1662.0,980.3 L1664.0,984.6 L1666.0,983.4 L1668.0,986.5 L1670.0,983.7 L1672.0,982.8 L1674.0,982.6 L1676.0,985.8 L1678.0,994.6 L1680.0,1001.3 L1682.0,1004.4 L1684.0,1004.9 L1686.0,1009.8 L1688.0,1011.4 L1690.0,1011.1 L1692.0,1007.8 L1694.0,1006.9 L1696.0,1000.6 L1698.0,1000.1 L1700.0,1000.6 L1702.0,1002.5 L1704.0,1006.4 L1706.0,1007.9 L1708.0,1011.3 L1710.0,1011.0 L1712.0,1012.5 L1714.0,1008.6 L1716.0,1009.0 L1718.0,1005.8 L1720.0,1010.1 L1722.0,1013.1 L1724.0,1012.3 L1726.0,1012.0 L1728.0,1014.8 L1730.0,1017.1 L1732.0,1016.2 L1734.0,1018.3 L1736.0,1017.3 L1738.0,1017.2 L1740.0,1016.5 L1742.0,1014.1 L1744.0,1016.4 L1746.0,1015.2 L1748.0,1019.4 L1750.0,1017.9 L1752.0,1021.9 L1754.0,1018.7 L1756.0,1014.4 L1758.0,1011.1 L1760.0,1011.0 L1762.0,1012.3 L1764.0,1015.4 L1766.0,1015.7 L1768.0,1018.8 L1770.0,1016.5 L1772.0,1019.0 L1774.0,1015.8 L1776.0,1009.7 L1778.0,1013.4 L1780.0,1015.4 L1782.0,1015.1 L1784.0,1011.8 L1786.0,1015.8 L1788.0,1017.1 L1790.0,1015.4 L1792.0,1019.3 L1794.0,1016.7 L1796.0,1019.8 L1798.0,1022.9 L1800.0,1021.4 L1802.0,1028.2 L1804.0,1032.5 L1806.0,1030.1 L1808.0,1030.9 L1810.0,1031.6 L1812.0,1030.8 L1814.0,1032.9 L1816.0,1030.7 L1818.0,1033.1 L1820.0,1029.8 L1822.0,1026.7 L1824.0,1027.1 L1826.0,1023.6 L1828.0,1026.3 L1830.0,1032.3 L1832.0,1032.4 L1834.0,1028.5 L1836.0,1023.2 L1838.0,1024.1 L1840.0,1028.0 L1842.0,1032.6 L1844.0,1027.2 L1846.0,1025.5 L1848.0,1021.3 L1850.0,1017.9 L1852.0,1015.9 L1854.0,1010.4 L1856.0,1006.7 L1858.0,1006.8 L1860.0,1008.2 L1862.0,1013.9 L1864.0,1018.0 L1866.0,1014.1 L1868.0,1008.6 L1870.0,1004.4 L1872.0,1007.9 L1874.0,1007.5 L1876.0,1007.7 L1878.0,1007.1 L1880.0,1004.2 L1882.0,1004.2 L1884.0,999.4 L1886.0,997.3 L1888.0,993.7 L1890.0,996.2 L1892.0,998.5 L1894.0,997.0 L1896.0,993.8 L1898.0,991.0 L1900.0,990.0 L1902.0,991.7 L1904.0,989.2 L1906.0,989.5 L1908.0,984.4 L1910.0,988.0 L1912.0,986.8 L1914.0,988.3 L1916.0,987.8 L1918.0,991.9 L1920.0,994.1 L1922.0,1000.4 L1924.0,1002.3 L1926.0,1005.6 L1928.0,1005.5 L1930.0,1008.1 L1932.0,1009.9 L1934.0,1010.0 L1936.0,1013.6 L1938.0,1011.3 L1940.0,1010.6 L1942.0,1006.8 L1944.0,1007.1 L1946.0,1009.2 L1948.0,1010.0 L1950.0,1003.8 L1952.0,1006.1 L1954.0,1013.7 L1956.0,1016.7 L1958.0,1010.9 L1960.0,1011.3 L1962.0,1010.3 L1964.0,1010.4 L1966.0,1008.0 L1968.0,1009.6 L1970.0,1008.0 L1972.0,1011.1 L1974.0,1011.2 L1976.0,1018.9 L1978.0,1019.8 L1980.0,1015.4 L1982.0,1009.7 L1984.0,1009.3 L1986.0,1012.9 L1988.0,1014.2 L1990.0,1014.4 L1992.0,1019.5 L1994.0,1023.2 L1996.0,1021.8 L1998.0,1019.4 L2000.0,1017.3 L2002.0,1017.7 L2004.0,1017.3 L2006.0,1018.5 L2008.0,1019.0 L2010.0,1020.9 L2012.0,1024.2 L2014.0,1027.0 L2016.0,1028.5 L2018.0,1028.0 L2020.0,1026.1 L2022.0,1027.9 L2024.0,1029.4 L2026.0,1029.5 L2028.0,1026.5 L2030.0,1029.1 L2032.0,1024.8 L2034.0,1020.8 L2036.0,1023.8 L2038.0,1026.7 L2040.0,1030.7 L2042.0,1031.6 L2044.0,1038.1 L2046.0,1035.9 L2048.0,1031.9 L2050.0,1029.7 L2052.0,1033.9 L2054.0,1037.9 L2056.0,1040.1 L2058.0,1036.0 L2060.0,1034.3 L2062.0,1031.1 L2064.0,1028.2 L2066.0,1022.4 L2068.0,1027.5 L2070.0,1028.3 L2072.0,1032.4 L2074.0,1027.2 L2076.0,1027.9 L2078.0,1024.9 L2080.0,1019.7 L2082.0,1020.9 L2084.0,1017.3 L2086.0,1015.6 L2088.0,1015.6 L2090.0,1013.6 L2092.0,1013.5 L2094.0,1013.9 L2096.0,1011.7 L2098.0,1010.1 L2100.0,1007.0 L2102.0,1007.0 L2104.0,1007.1 L2106.0,1007.7 L2108.0,1009.9 L2110.0,1008.5 L2112.0,1005.3 L2114.0,1002.3 L2116.0,1003.5 L2118.0,1003.4 L2120.0,1000.1 L2122.0,995.5 L2124.0,989.0 L2126.0,989.6 L2128.0,986.6 L2130.0,988.9 L2132.0,987.6 L2134.0,985.2 L2136.0,984.9 L2138.0,980.0 L2140.0,980.0 L2142.0,981.6 L2144.0,983.2 L2146.0,984.7 L2148.0,987.5 L2150.0,992.0 L2152.0,988.9 L2154.0,983.8 L2156.0,979.1 L2158.0,981.9 L2160.0,989.8 L2162.0,994.8 L2164.0,991.7 L2166.0,988.4 L2168.0,981.3 L2170.0,988.9 L2172.0,993.4 L2174.0,1003.7 L2176.0,1003.0 L2178.0,1001.9 L2180.0,1004.0 L2182.0,1000.6 L2184.0,998.8 L2186.0,1002.3 L2188.0,1002.0 L2190.0,1003.8 L2192.0,1002.3 L2194.0,1002.7 L2196.0,1004.8 L2198.0,1003.0 L2200.0,1005.0 L2202.0,1001.6 L2204.0,1004.1 L2206.0,1005.3 L2208.0,1010.5 L2210.0,1012.2 L2212.0,1016.0 L2214.0,1017.6 L2216.0,1013.9 L2218.0,1013.3 L2220.0,1008.9 L2222.0,1007.1 L2224.0,1003.9 L2226.0,1003.8 L2228.0,1003.6 L2230.0,1000.2 L2232.0,999.6 L2234.0,1004.5 L2236.0,1007.2 L2238.0,1008.6 L2240.0,1008.2 L2242.0,1011.6 L2244.0,1010.2 L2246.0,1011.7 L2248.0,1008.4 L2250.0,1008.6 L2252.0,1006.7 L2254.0,1003.5 L2256.0,1002.0 L2258.0,1001.0 L2260.0,1005.8 L2262.0,1007.7 L2264.0,1010.5 L2266.0,1014.3 L2268.0,1011.1 L2270.0,1014.8 L2272.0,1015.2 L2274.0,1015.3 L2276.0,1015.9 L2278.0,1023.3 L2280.0,1028.5 L2282.0,1025.3 L2284.0,1022.9 L2286.0,1017.1 L2288.0,1015.4 L2290.0,1012.2 L2292.0,1021.5 L2294.0,1027.5 L2296.0,1026.1 L2298.0,1026.0 L2300.0,1024.5 L2302.0,1020.0 L2304.0,1017.8 L2306.0,1016.2 L2308.0,1012.7 L2310.0,1007.6 L2312.0,1008.1 L2314.0,1005.4 L2316.0,1005.3 L2318.0,1004.0 L2320.0,1005.6 L2322.0,1003.5 L2324.0,1003.1 L2326.0,1001.5 L2328.0,998.8 L2330.0,1000.0 L2332.0,998.0 L2334.0,996.5 L2336.0,994.4 L2338.0,993.9 L2340.0,996.1 L2342.0,997.9 L2344.0,998.3 L2346.0,996.6 L2348.0,995.7 L2350.0,992.3 L2352.0,986.3 L2354.0,979.8 L2356.0,980.3 L2358.0,976.4 L2360.0,977.7 L2362.0,980.2 L2364.0,984.7 L2366.0,982.0 L2368.0,981.5 L2370.0,978.7 L2372.0,972.5 L2374.0,975.4 L2376.0,981.2 L2378.0,981.0 L2380.0,984.0 L2382.0,982.4 L2384.0,976.1 L2386.0,971.7 L2388.0,973.0 L2390.0,979.0 L2392.0,987.7 L2394.0,990.9 L2396.0,996.1 L2398.0,997.0 L2400.0,993.0 L2402.0,992.2 L2404.0,989.7 L2406.0,992.6 L2408.0,992.9 L2410.0,994.2 L2412.0,999.1 L2414.0,1000.6 L2416.0,1003.2 L2418.0,1005.3 L2420.0,1000.4 L2422.0,992.9 L2424.0,992.3 L2426.0,999.0 L2428.0,1001.7 L2430.0,1001.7 L2432.0,999.0 L2434.0,993.4 L2436.0,992.5 L2438.0,992.0 L2440.0,997.8 L2442.0,999.7 L2444.0,1001.2 L2446.0,1005.2 L2448.0,1003.4 L2450.0,1003.8 L2452.0,1003.8 L2454.0,1006.8 L2456.0,1008.9 L2458.0,1009.6 L2460.0,1007.9 L2462.0,1008.1 L2464.0,1003.7 L2466.0,1002.8 L2468.0,1003.7 L2470.0,1008.7 L2472.0,1010.7 L2474.0,1014.0" stroke="#7cc224"/>
 </g>
 <!-- badges -->
 <g stroke-width="1.6">
  <path d="M12,386 H40 L54,402 L40,418 H12 Q8,418 8,414 V390 Q8,386 12,386 Z" fill="#e5f7f9" stroke="#2cc4cf"/>
  <path d="M12,830.5 H40 L54.5,846.5 L40,864 H12 Q8,864 8,860 V834.5 Q8,830.5 12,830.5 Z" fill="#fde9ed" stroke="#ee8595"/>
  <path d="M12,1013.5 H40 L54.5,1030 L40,1046.5 H12 Q8,1046.5 8,1042.5 V1017.5 Q8,1013.5 12,1013.5 Z" fill="#8bc93a" stroke="#2d2d2d"/>
 </g>
 <!-- trigger marker -->
 <polygon points="1103,70 1129,70 1116.3,82.6" fill="#f0852e"/>
 <path d="M1102.7,83 H1129 V110 H1121.5 L1116.5,121.5 L1111.5,110 H1102.7 Z" fill="#f0852e"/>
 <path d="M1105.7,86 H1126 V107 H1120 L1116.5,113 L1113,107 H1105.7 Z" fill="#050505"/>
 <path d="M1110,89.3 H1121.5 V92 H1118 V103.5 H1113.8 V92 H1110 Z" fill="#f0852e"/>
 <!-- zoom triangle -->
 <path d="M2425,78 H2462 Q2467,78 2467,83 V119 Q2467,124 2463,121 L2423,82 Q2420,78 2425,78 Z" fill="#4a4a4a" stroke="#1b1b1b" stroke-width="2"/>
 <circle cx="2457" cy="87.7" r="5.3" fill="none" stroke="#a4a4a4" stroke-width="2.3"/>
 <line x1="2445.5" y1="99.3" x2="2452.6" y2="92.3" stroke="#a4a4a4" stroke-width="3.4" stroke-linecap="round"/>
 <!-- right arrow -->
 <path d="M2448,338.8 L2462.2,326.8 V351 Z" fill="#050505" stroke="#050505" stroke-width="2.2" stroke-linejoin="round"/><line x1="2462" y1="338.8" x2="2472.6" y2="338.8" stroke="#050505" stroke-width="5" stroke-linecap="round"/>
 <!-- text -->
 <g font-family='"Liberation Sans", sans-serif'>
 <text x="2470" y="182.6" font-size="17.5" fill="#1c1c1c" font-weight="normal" text-anchor="end" textLength="51" lengthAdjust="spacingAndGlyphs" class="gl">70 mA</text><text x="2470" y="303.7" font-size="17.5" fill="#1c1c1c" font-weight="normal" text-anchor="end" textLength="51" lengthAdjust="spacingAndGlyphs" class="gl">60 mA</text><text x="2470" y="426.1" font-size="17.5" fill="#1c1c1c" font-weight="normal" text-anchor="end" textLength="51" lengthAdjust="spacingAndGlyphs" class="gl">50 mA</text><text x="2470" y="548.4" font-size="17.5" fill="#1c1c1c" font-weight="normal" text-anchor="end" textLength="51" lengthAdjust="spacingAndGlyphs" class="gl">40 mA</text><text x="2470" y="670.6" font-size="17.5" fill="#1c1c1c" font-weight="normal" text-anchor="end" textLength="51" lengthAdjust="spacingAndGlyphs" class="gl">30 mA</text><text x="2470" y="793.2" font-size="17.5" fill="#1c1c1c" font-weight="normal" text-anchor="end" textLength="51" lengthAdjust="spacingAndGlyphs" class="gl">20 mA</text><text x="2470" y="914.2" font-size="17.5" fill="#1c1c1c" font-weight="normal" text-anchor="end" textLength="51" lengthAdjust="spacingAndGlyphs" class="gl">10 mA</text><text x="2470" y="1036.4" font-size="17.5" fill="#1c1c1c" font-weight="normal" text-anchor="end" textLength="25.5" lengthAdjust="spacingAndGlyphs" class="gl">0 A</text><text x="2470" y="1159.2" font-size="17.5" fill="#1c1c1c" font-weight="normal" text-anchor="end" textLength="57" lengthAdjust="spacingAndGlyphs" class="gl">-10 mA</text><text x="2470" y="1280.8" font-size="17.5" fill="#1c1c1c" font-weight="normal" text-anchor="end" textLength="57" lengthAdjust="spacingAndGlyphs" class="gl">-20 mA</text><text x="128.2" y="1285" font-size="18" fill="#111" font-weight="normal" text-anchor="middle" class="xl">-4 μs</text><text x="375.7" y="1285" font-size="18" fill="#111" font-weight="normal" text-anchor="middle" class="xl">-3 μs</text><text x="623.0" y="1285" font-size="18" fill="#111" font-weight="normal" text-anchor="middle" class="xl">-2 μs</text><text x="869.0" y="1285" font-size="18" fill="#111" font-weight="normal" text-anchor="middle" class="xl">-1 μs</text><text x="1116.5" y="1285" font-size="18" fill="#111" font-weight="normal" text-anchor="middle" class="xl">0 s</text><text x="1363.9" y="1285" font-size="18" fill="#111" font-weight="normal" text-anchor="middle" class="xl">1 μs</text><text x="1611.2" y="1285" font-size="18" fill="#111" font-weight="normal" text-anchor="middle" class="xl">2 μs</text><text x="1858.9" y="1285" font-size="18" fill="#111" font-weight="normal" text-anchor="middle" class="xl">3 μs</text><text x="2104.9" y="1285" font-size="18" fill="#111" font-weight="normal" text-anchor="middle" class="xl">4 μs</text><text x="2352.1" y="1285" font-size="18" fill="#111" font-weight="normal" text-anchor="middle" class="xl">5 μs</text>
 </g>
</svg>
<svg width="2501" height="1407" style="position:absolute;left:0;top:0"><g font-family='"Liberation Sans", sans-serif'><text x="69.5" y="355.0" font-size="26" fill="#1ab0c0" font-weight="normal" text-anchor="start" textLength="36.5" lengthAdjust="spacingAndGlyphs" stroke="#17606a" stroke-width="0.9" paint-order="stroke">SW</text><text x="71" y="890.5" font-size="25.5" fill="#e0304e" font-weight="normal" text-anchor="start" textLength="28.7" lengthAdjust="spacingAndGlyphs" stroke="#7a2030" stroke-width="0.9" paint-order="stroke">I_L</text><text x="65.3" y="1093.8" font-size="25.5" fill="#7cc42a" font-weight="normal" text-anchor="start" textLength="44.6" lengthAdjust="spacingAndGlyphs" stroke="#3d6518" stroke-width="0.9" paint-order="stroke">Iout</text><text x="19.6" y="406.8" font-size="16" fill="#111" font-weight="normal" text-anchor="start" textLength="22.3" lengthAdjust="spacingAndGlyphs" >C 2</text><text x="19.2" y="851.5" font-size="16" fill="#111" font-weight="normal" text-anchor="start" textLength="22.9" lengthAdjust="spacingAndGlyphs" >C 3</text><text x="19.5" y="1034.5" font-size="16" fill="#111" font-weight="normal" text-anchor="start" textLength="23.2" lengthAdjust="spacingAndGlyphs" >C 4</text></g></svg>
<svg width="2501" height="1407" style="position:absolute;left:0;top:0">
<rect x="26.4" y="24" width="10.100000000000001" height="2" fill="#e8e8e8"/><rect x="112.3" y="24" width="11.200000000000003" height="2" fill="#e8e8e8"/><rect x="202" y="24" width="15" height="2" fill="#e8e8e8"/><rect x="312.3" y="24" width="15.699999999999989" height="2" fill="#e8e8e8"/><rect x="3.7" y="1300.4" width="117.3" height="103.2" rx="5" fill="#c9c9c9"/><path d="M3.7,1325 V1305.4 Q3.7,1300.4 8.7,1300.4 H116 Q121,1300.4 121,1305.4 V1325 Z" fill="#1d3a40"/><rect x="3.7" y="1325" width="117.3" height="2" fill="#b4b2b6"/><rect x="127.5" y="1300.4" width="117.19999999999999" height="103.2" rx="5" fill="#c9c9c9"/><path d="M127.5,1325 V1305.4 Q127.5,1300.4 132.5,1300.4 H239.7 Q244.7,1300.4 244.7,1305.4 V1325 Z" fill="#42222b"/><rect x="127.5" y="1325" width="117.19999999999999" height="2" fill="#b4b2b6"/><rect x="127.5" y="1324" width="117.2" height="1.2" fill="#d84050"/><rect x="251.2" y="1300.4" width="117.19999999999999" height="103.2" rx="5" fill="#c9c9c9"/><path d="M251.2,1325 V1305.4 Q251.2,1300.4 256.2,1300.4 H363.4 Q368.4,1300.4 368.4,1305.4 V1325 Z" fill="#8dd12f"/><rect x="251.2" y="1325" width="117.19999999999999" height="2" fill="#b4b2b6"/><g fill="none" stroke="#111" stroke-width="1.4"><path d="M16.5,1368 Q17,1357 24,1357 Q31,1357 32,1366"/><circle cx="24" cy="1361" r="3.2"/><rect x="14.5" y="1365" width="4" height="7" rx="2" fill="#ddd"/><rect x="29" y="1366" width="4.5" height="6.5" rx="1" fill="#eee"/></g><path d="M330.5,1366 C331.5,1358 333,1356.5 334.5,1357.5 C336.5,1359 337.5,1369 339.5,1371 C341,1372.5 343,1371 344,1364" fill="none" stroke="#111" stroke-width="1.5"/><rect x="1275.7" y="1300" width="50.2" height="101.5" rx="7" fill="#2b2b2b" stroke="#5b5a4c" stroke-width="1"/><path d="M1276.7,1315 V1307 Q1276.7,1301 1282.7,1301 H1318.9 Q1324.9,1301 1324.9,1307 V1315 Z" fill="#3a3a3a"/><rect x="1276.7" y="1390" width="48.2" height="10.5" rx="6" fill="#242424"/><rect x="1280.8" y="1309.6" width="40.0" height="2.6" rx="1" fill="#f4f0d8"/><rect x="1334.1" y="1300" width="50.2" height="101.5" rx="7" fill="#2b2b2b" stroke="#5b5a4c" stroke-width="1"/><path d="M1335.1,1315 V1307 Q1335.1,1301 1341.1,1301 H1377.3 Q1383.3,1301 1383.3,1307 V1315 Z" fill="#3a3a3a"/><rect x="1335.1" y="1390" width="48.2" height="10.5" rx="6" fill="#242424"/><rect x="1339.1999999999998" y="1309.6" width="40.0" height="2.6" rx="1" fill="#f2a494"/><rect x="1393.0" y="1300" width="50.2" height="101.5" rx="7" fill="#2b2b2b" stroke="#5b5a4c" stroke-width="1"/><path d="M1394.0,1315 V1307 Q1394.0,1301 1400.0,1301 H1436.2 Q1442.2,1301 1442.2,1307 V1315 Z" fill="#3a3a3a"/><rect x="1394.0" y="1390" width="48.2" height="10.5" rx="6" fill="#242424"/><rect x="1398.1" y="1309.6" width="40.0" height="2.6" rx="1" fill="#263250"/><rect x="1472.5" y="1300" width="50.2" height="101.5" rx="7" fill="#2b2b2b" stroke="#5b5a4c" stroke-width="1"/><path d="M1473.5,1315 V1307 Q1473.5,1301 1479.5,1301 H1515.7 Q1521.7,1301 1521.7,1307 V1315 Z" fill="#3a3a3a"/><rect x="1473.5" y="1390" width="48.2" height="10.5" rx="6" fill="#242424"/><rect x="1477.6" y="1309.6" width="40.0" height="2.6" rx="1" fill="#e87a2a"/><rect x="1530.9" y="1300" width="50.2" height="101.5" rx="7" fill="#2b2b2b" stroke="#5b5a4c" stroke-width="1"/><path d="M1531.9,1315 V1307 Q1531.9,1301 1537.9,1301 H1574.1000000000001 Q1580.1000000000001,1301 1580.1000000000001,1307 V1315 Z" fill="#3a3a3a"/><rect x="1531.9" y="1390" width="48.2" height="10.5" rx="6" fill="#242424"/><rect x="1536.0" y="1309.6" width="40.0" height="2.6" rx="1" fill="#b4b4d2"/><rect x="1589.3" y="1300" width="50.2" height="101.5" rx="7" fill="#2b2b2b" stroke="#5b5a4c" stroke-width="1"/><path d="M1590.3,1315 V1307 Q1590.3,1301 1596.3,1301 H1632.5 Q1638.5,1301 1638.5,1307 V1315 Z" fill="#3a3a3a"/><rect x="1590.3" y="1390" width="48.2" height="10.5" rx="6" fill="#242424"/><rect x="1594.3999999999999" y="1309.6" width="40.0" height="2.6" rx="1" fill="#d6acd6"/><rect x="1457" y="1300" width="1.3" height="102" fill="#55602f"/><rect x="1653.8" y="1300" width="1.3" height="102" fill="#55602f"/><rect x="1668" y="1299.2" width="260" height="102.3" rx="6" fill="#c9c9c9"/><path d="M1668,1323.5 V1305.2 Q1668,1299.2 1674,1299.2 H1922 Q1928,1299.2 1928,1305.2 V1323.5 Z" fill="#4f4f53"/><rect x="1668" y="1323.5" width="260" height="2.2" fill="#a9a9ab"/><rect x="1941.5" y="1299.2" width="207.69999999999982" height="102.3" rx="6" fill="#c9c9c9"/><path d="M1941.5,1323.5 V1305.2 Q1941.5,1299.2 1947.5,1299.2 H2143.2 Q2149.2,1299.2 2149.2,1305.2 V1323.5 Z" fill="#4f4f53"/><rect x="1941.5" y="1323.5" width="207.69999999999982" height="2.2" fill="#a9a9ab"/><rect x="2162.3" y="1299.2" width="195.5999999999999" height="102.3" rx="6" fill="#c9c9c9"/><path d="M2162.3,1323.5 V1305.2 Q2162.3,1299.2 2168.3,1299.2 H2351.9 Q2357.9,1299.2 2357.9,1305.2 V1323.5 Z" fill="#4f4f53"/><rect x="2162.3" y="1323.5" width="195.5999999999999" height="2.2" fill="#a9a9ab"/><rect x="1951" y="1331.5" width="37.5" height="20.5" rx="6" fill="#22cbd6" stroke="#1b1b1b" stroke-width="1.4"/>
<path d="M2001.5,1332 H2006 C2012.5,1332 2010.5,1350 2017,1350 H2023 M2001.5,1350 H2006 C2012.5,1350 2010.5,1332 2017,1332 H2023" fill="none" stroke="#2c3f6e" stroke-width="1.3"/>
<path d="M1814.6,1381 H1827.2 V1393 H1823 L1820.9,1396.5 L1818.8,1393 H1814.6 Z" fill="#f0852e"/><rect x="1816.6" y="1383" width="8.6" height="8.5" fill="#111"/><path d="M1818,1384.5 H1824 V1386 H1821.7 V1390.5 H1820.3 V1386 H1818 Z" fill="#eee"/><rect x="2372" y="1300.4" width="115.6" height="44.6" rx="5.5" fill="#ff1f27" stroke="#5c5c66" stroke-width="1"/><g stroke="#c8c8c8" stroke-width="1.6" fill="none"><path d="M837,43 H829 V65 H837"/><path d="M1641,43 H1650 V65 H1641"/><line x1="829" y1="54.2" x2="1650" y2="54.2"/></g>
<polygon points="1189,39.5 1208,39.5 1198.5,46" fill="#f0852e"/>
<path d="M1190,47.5 H1207.5 V63.5 H1201.5 L1198.7,68.5 L1196,63.5 H1190 Z" fill="#c56a2a"/><path d="M1192,49.5 H1205.5 V61.5 H1200.5 L1198.7,64.5 L1197,61.5 H1192 Z" fill="#050505"/>
<path d="M1194.5,51.5 H1203 V53.5 H1199.8 V60 H1197.7 V53.5 H1194.5 Z" fill="#e07a2a"/><g fill="#ffffff">
<path d="M2325.3,5.6 H2348.6 L2346,11 H2339 V33.6 H2331.5 V11 H2325.3 Z"/>
<path d="M2351.3,12.2 C2357.8,12.2 2362.3,17 2362.3,23.5 L2362.2,25.3 H2347.5 C2348.2,28.2 2350,29.5 2352,29.5 C2354,29.5 2355.4,28.7 2356.4,27.4 L2361.6,29.8 C2359.6,32.4 2356.3,34.1 2351.6,34.1 C2345,34.1 2340.4,29.4 2340.4,23.2 C2340.4,17 2345,12.2 2351.3,12.2 Z M2347.8,20.5 H2355.2 C2354.6,18.4 2353.2,17.2 2351.4,17.2 C2349.6,17.2 2348.3,18.4 2347.8,20.5 Z"/>
<path d="M2363.2,5.6 H2369.6 V26 L2363.2,33.6 Z"/>
<path d="M2376,24.5 L2382.5,33.6 H2375 L2372.2,29.5 Z"/>
<path d="M2390.5,5.6 L2391.2,5.6 V12.2 H2393.8 V17.4 H2391.2 V33.6 H2385.8 V17.4 H2383.6 L2386,12.2 Z"/>
<path d="M2395.9,12.7 H2401.7 V15.5 C2402.8,13.5 2404.4,12.4 2406.6,12.3 V18.3 C2403.6,18.3 2401.7,20 2401.7,23.5 V33.6 H2395.9 Z"/>
<path d="M2417.3,12.2 C2423.5,12.2 2428.2,16.9 2428.2,23.1 C2428.2,29.3 2423.5,34.1 2417.3,34.1 C2411.1,34.1 2406.4,29.3 2406.4,23.1 C2406.4,16.9 2411.1,12.2 2417.3,12.2 Z M2417.3,18 C2414.5,18 2412.5,20.2 2412.5,23.1 C2412.5,26 2414.5,28.3 2417.3,28.3 C2420.1,28.3 2422.1,26 2422.1,23.1 C2422.1,20.2 2420.1,18 2417.3,18 Z"/>
<path d="M2429.5,12.7 H2435.2 V15 C2436.6,13.1 2438.5,12.2 2441,12.2 C2446,12.2 2449.3,15.3 2449.3,21 V33.6 H2443.3 V22 C2443.3,19.3 2442,17.9 2439.6,17.9 C2437.1,17.9 2435.5,19.5 2435.5,22.5 V33.6 H2429.5 Z"/>
<path d="M2450.3,12.7 H2456.9 V33.6 H2450.3 Z"/><circle cx="2453.6" cy="8.4" r="3.6"/>
<path d="M2457.9,12.7 H2465 L2468.2,17.8 L2471.3,12.7 H2478.3 L2471.8,22.6 L2478.6,33.6 H2471.4 L2468.2,28 L2464.9,33.6 H2457.8 L2464.6,22.6 Z"/>
</g>
<path d="M2373.5,12 H2384 L2370,33.6 H2363.5 Z" fill="#22c7d3"/>
<g fill="#cfcfcf"><circle cx="2489.5" cy="652.9" r="3"/><circle cx="2489.5" cy="664.4" r="3"/><circle cx="2489.5" cy="675.5" r="3"/></g>
<g font-family='"Liberation Sans", sans-serif'><text x="25.599999999999998" y="21.6" font-size="20" fill="#f2f2f2" font-weight="normal" text-anchor="start" textLength="34.0" lengthAdjust="spacingAndGlyphs" >File</text><text x="112.0" y="21.6" font-size="20" fill="#f2f2f2" font-weight="normal" text-anchor="start" textLength="37.0" lengthAdjust="spacingAndGlyphs" >Edit</text><text x="201.5" y="21.6" font-size="20" fill="#f2f2f2" font-weight="normal" text-anchor="start" textLength="59.0" lengthAdjust="spacingAndGlyphs" >Utility</text><text x="311.9" y="21.6" font-size="20" fill="#f2f2f2" font-weight="normal" text-anchor="start" textLength="46.8" lengthAdjust="spacingAndGlyphs" >Help</text><text x="21.25" y="61.25" font-size="20.5" fill="#e4e4e4" font-weight="normal" text-anchor="start" textLength="152.5" lengthAdjust="spacingAndGlyphs" >Waveform View</text><text x="11.2" y="1318.7" font-size="20" fill="#2ab4cc" font-weight="normal" text-anchor="start" textLength="38.3" lengthAdjust="spacingAndGlyphs" stroke="#2ab4cc" stroke-width="0.4">Ch 2</text><text x="134.5" y="1318.7" font-size="20" fill="#e8304c" font-weight="normal" text-anchor="start" textLength="39.5" lengthAdjust="spacingAndGlyphs" stroke="#e8304c" stroke-width="0.5">Ch 3</text><text x="258.8" y="1318.7" font-size="20" fill="#151515" font-weight="normal" text-anchor="start" textLength="37.9" lengthAdjust="spacingAndGlyphs" >Ch 4</text><text x="15" y="1348.7" font-size="19.5" fill="#0a0a0a" font-weight="normal" text-anchor="start" textLength="70.3" lengthAdjust="spacingAndGlyphs" >10 V/div</text><text x="13.7" y="1398" font-size="19.5" fill="#0a0a0a" font-weight="normal" text-anchor="start" textLength="67.8" lengthAdjust="spacingAndGlyphs" >20 MHz</text><text x="138.7" y="1348.2" font-size="19.5" fill="#0a0a0a" font-weight="normal" text-anchor="start" textLength="60.8" lengthAdjust="spacingAndGlyphs" >1 A/div</text><text x="138.7" y="1374.2" font-size="19.5" fill="#0a0a0a" font-weight="normal" text-anchor="start" textLength="46.8" lengthAdjust="spacingAndGlyphs" >1 MΩ</text><text x="137.7" y="1397.6" font-size="19.5" fill="#0a0a0a" font-weight="normal" text-anchor="start" textLength="67.5" lengthAdjust="spacingAndGlyphs" >20 MHz</text><text x="261.9" y="1348.2" font-size="19.5" fill="#0a0a0a" font-weight="normal" text-anchor="start" textLength="89.4" lengthAdjust="spacingAndGlyphs" >10 mA/div</text><text x="261.9" y="1374.2" font-size="19.5" fill="#0a0a0a" font-weight="normal" text-anchor="start" textLength="46.8" lengthAdjust="spacingAndGlyphs" >1 MΩ</text><text x="261.4" y="1397.6" font-size="19.5" fill="#0a0a0a" font-weight="normal" text-anchor="start" textLength="67.6" lengthAdjust="spacingAndGlyphs" >20 MHz</text><text x="100" y="1390" font-size="12" fill="#0a0a0a" font-weight="bold" text-anchor="start" >B</text><text x="107" y="1394.5" font-size="11" fill="#0a0a0a" font-weight="bold" text-anchor="start" >w</text><text x="224" y="1390" font-size="12" fill="#0a0a0a" font-weight="bold" text-anchor="start" >B</text><text x="231" y="1394.5" font-size="11" fill="#0a0a0a" font-weight="bold" text-anchor="start" >w</text><text x="347.6" y="1390" font-size="12" fill="#0a0a0a" font-weight="bold" text-anchor="start" >B</text><text x="354.6" y="1394.5" font-size="11" fill="#0a0a0a" font-weight="bold" text-anchor="start" >w</text><text x="1300.8" y="1358" font-size="25.5" fill="#f2f2f2" font-weight="normal" text-anchor="middle" >1</text><text x="1359.2" y="1358" font-size="25.5" fill="#f2f2f2" font-weight="normal" text-anchor="middle" >5</text><text x="1418.1" y="1358" font-size="25.5" fill="#f2f2f2" font-weight="normal" text-anchor="middle" >6</text><text x="1497.6" y="1339.6" font-size="20.5" fill="#f2f2f2" font-weight="normal" text-anchor="middle" >Add</text><text x="1497.6" y="1360.4" font-size="20.5" fill="#f2f2f2" font-weight="normal" text-anchor="middle" >New</text><text x="1497.6" y="1381.2" font-size="20.5" fill="#f2f2f2" font-weight="normal" text-anchor="middle" >Math</text><text x="1556" y="1339.6" font-size="20.5" fill="#f2f2f2" font-weight="normal" text-anchor="middle" >Add</text><text x="1556" y="1360.4" font-size="20.5" fill="#f2f2f2" font-weight="normal" text-anchor="middle" >New</text><text x="1556" y="1381.2" font-size="20.5" fill="#f2f2f2" font-weight="normal" text-anchor="middle" >Ref</text><text x="1614.4" y="1339.6" font-size="20.5" fill="#f2f2f2" font-weight="normal" text-anchor="middle" >Add</text><text x="1614.4" y="1360.4" font-size="20.5" fill="#f2f2f2" font-weight="normal" text-anchor="middle" >New</text><text x="1614.4" y="1381.2" font-size="20.5" fill="#f2f2f2" font-weight="normal" text-anchor="middle" >Bus</text><text x="1675" y="1318" font-size="20.5" fill="#ececec" font-weight="normal" text-anchor="start" textLength="94.6" lengthAdjust="spacingAndGlyphs" >Horizontal</text><text x="1947.8" y="1318" font-size="20.5" fill="#ececec" font-weight="normal" text-anchor="start" textLength="63.8" lengthAdjust="spacingAndGlyphs" >Trigger</text><text x="2169.7" y="1317.5" font-size="20.5" fill="#ececec" font-weight="normal" text-anchor="start" textLength="100.3" lengthAdjust="spacingAndGlyphs" >Acquisition</text><text x="1678" y="1347.6" font-size="19.5" fill="#0a0a0a" font-weight="normal" text-anchor="start" textLength="66.5" lengthAdjust="spacingAndGlyphs" >1 μs/div</text><text x="1816.4" y="1347.6" font-size="19.5" fill="#0a0a0a" font-weight="normal" text-anchor="start" textLength="44.1" lengthAdjust="spacingAndGlyphs" >10 μs</text><text x="1677.9" y="1371.9" font-size="19.5" fill="#0a0a0a" font-weight="normal" text-anchor="start" textLength="122.3" lengthAdjust="spacingAndGlyphs" >SR: 3.125 GS/s</text><text x="1815.5" y="1371.9" font-size="19.5" fill="#0a0a0a" font-weight="normal" text-anchor="start" textLength="81" lengthAdjust="spacingAndGlyphs" >320 ps/pt</text><text x="1677.9" y="1396.5" font-size="19.5" fill="#0a0a0a" font-weight="normal" text-anchor="start" textLength="123.1" lengthAdjust="spacingAndGlyphs" >RL: 31.25 kpts</text><text x="1833.5" y="1396.5" font-size="19.5" fill="#0a0a0a" font-weight="normal" text-anchor="start" textLength="38.7" lengthAdjust="spacingAndGlyphs" >45%</text><text x="2036.8" y="1347.6" font-size="19.5" fill="#0a0a0a" font-weight="normal" text-anchor="start" textLength="44.2" lengthAdjust="spacingAndGlyphs" >5.2 V</text><text x="2172.2" y="1347.5" font-size="19.5" fill="#0a0a0a" font-weight="normal" text-anchor="start" textLength="49.3" lengthAdjust="spacingAndGlyphs" >Auto,</text><text x="2249.4" y="1347.5" font-size="19.5" fill="#0a0a0a" font-weight="normal" text-anchor="start" textLength="70.6" lengthAdjust="spacingAndGlyphs" >Analyze</text><text x="2172.2" y="1372.2" font-size="19.5" fill="#0a0a0a" font-weight="normal" text-anchor="start" textLength="135.5" lengthAdjust="spacingAndGlyphs" >Sample: 12 bits</text><text x="2173" y="1396.8" font-size="19.5" fill="#0a0a0a" font-weight="normal" text-anchor="start" textLength="78.9" lengthAdjust="spacingAndGlyphs" >113 Acqs</text><text x="1969.8" y="1349" font-size="19" fill="#0a0a0a" font-weight="normal" text-anchor="middle" >2</text><text x="2394.8" y="1327.8" font-size="17" fill="#ffc4c4" font-weight="bold" text-anchor="start" textLength="67.4" lengthAdjust="spacingAndGlyphs" >Stopped</text></g>
</svg>
</body></html>
